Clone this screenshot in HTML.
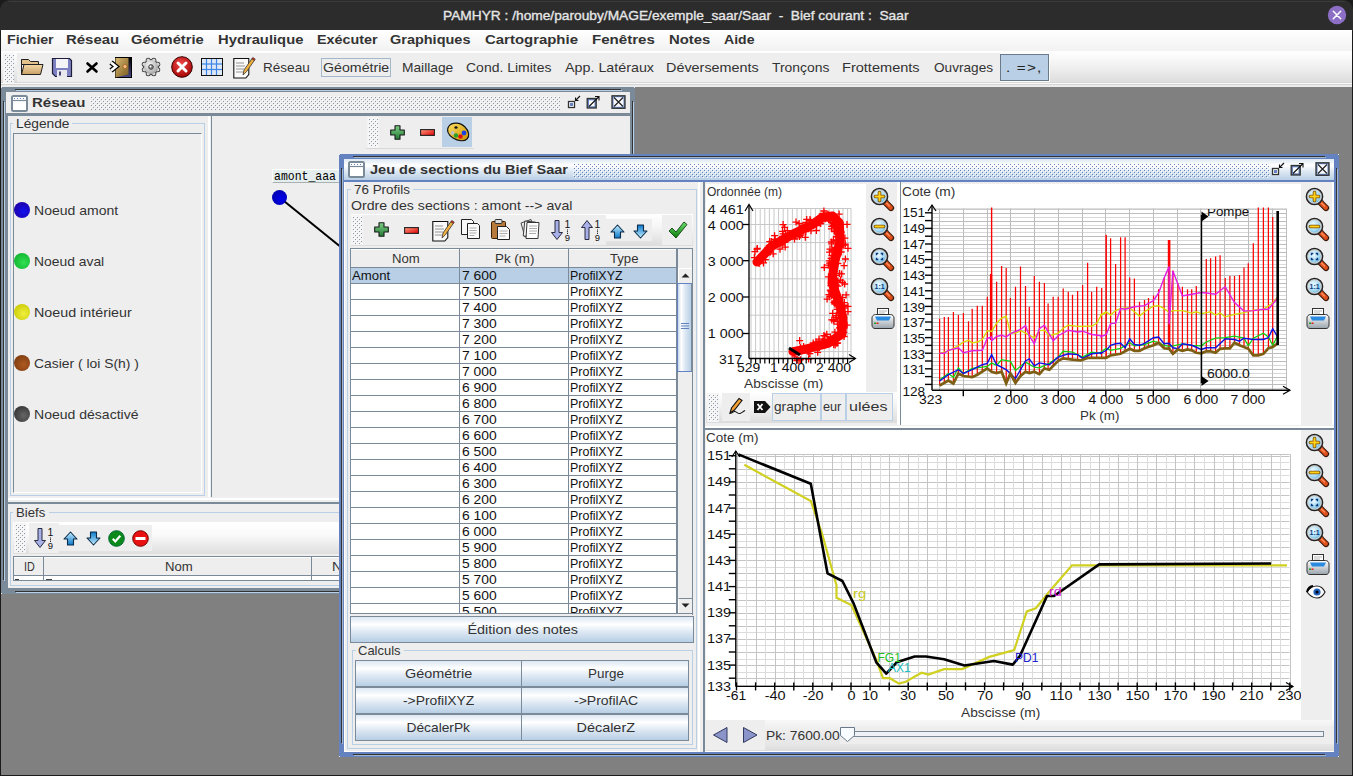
<!DOCTYPE html>
<html><head><meta charset="utf-8"><style>
*{box-sizing:border-box;margin:0;padding:0}
html,body{width:1353px;height:776px;overflow:hidden;background:#1b1b1b}
body{position:relative;font-family:"Liberation Sans",sans-serif}
.a{position:absolute}
.t{position:absolute;white-space:pre;line-height:1}
svg{position:absolute;overflow:visible}
</style></head><body>
<div class="a" style="left:1px;top:30px;width:1351px;height:745px;background:#808080"></div>
<div class="a" style="left:0px;top:0px;width:1353px;height:31px;background:#2c2c2c;border-radius:10px 10px 0 0"></div>
<div class="a" style="left:8px;top:1px;width:1337px;height:1px;background:#3a3a3a"></div>
<div id="t0" class="t" style="left:443.00px;top:9.00px;font-family:'Liberation Sans',sans-serif;font-size:13.5px;color:#e6e6e6;transform:scaleX(1.0175);transform-origin:0 0;-webkit-text-stroke:0.35px #e6e6e6">PAMHYR : /home/parouby/MAGE/exemple_saar/Saar  -  Bief courant :  Saar</div>
<svg style="left:1327px;top:5px" width="20" height="20"><circle cx="10" cy="10" r="9.2" fill="#8c6fc5"/><path d="M6.3 6.3L13.7 13.7M13.7 6.3L6.3 13.7" stroke="#fff" stroke-width="1.5" stroke-linecap="round"/></svg>
<div class="a" style="left:1px;top:30px;width:1351px;height:21px;background:linear-gradient(#ffffff,#f2f2f2)"></div>
<div id="t1" class="t" style="left:7.00px;top:34.00px;font-family:'Liberation Sans',sans-serif;font-size:12.7px;font-weight:bold;color:#333;transform:scaleX(1.1190);transform-origin:0 0;">Fichier</div>
<div id="t2" class="t" style="left:66.00px;top:34.00px;font-family:'Liberation Sans',sans-serif;font-size:12.7px;font-weight:bold;color:#333;transform:scaleX(1.1778);transform-origin:0 0;">Réseau</div>
<div id="t3" class="t" style="left:131.00px;top:34.00px;font-family:'Liberation Sans',sans-serif;font-size:12.7px;font-weight:bold;color:#333;transform:scaleX(1.1587);transform-origin:0 0;">Géométrie</div>
<div id="t4" class="t" style="left:218.00px;top:34.00px;font-family:'Liberation Sans',sans-serif;font-size:12.7px;font-weight:bold;color:#333;transform:scaleX(1.1644);transform-origin:0 0;">Hydraulique</div>
<div id="t5" class="t" style="left:317.00px;top:34.00px;font-family:'Liberation Sans',sans-serif;font-size:12.7px;font-weight:bold;color:#333;transform:scaleX(1.1296);transform-origin:0 0;">Exécuter</div>
<div id="t6" class="t" style="left:390.00px;top:34.00px;font-family:'Liberation Sans',sans-serif;font-size:12.7px;font-weight:bold;color:#333;transform:scaleX(1.1408);transform-origin:0 0;">Graphiques</div>
<div id="t7" class="t" style="left:485.00px;top:34.00px;font-family:'Liberation Sans',sans-serif;font-size:12.7px;font-weight:bold;color:#333;transform:scaleX(1.1772);transform-origin:0 0;">Cartographie</div>
<div id="t8" class="t" style="left:592.00px;top:34.00px;font-family:'Liberation Sans',sans-serif;font-size:12.7px;font-weight:bold;color:#333;transform:scaleX(1.1887);transform-origin:0 0;">Fenêtres</div>
<div id="t9" class="t" style="left:669.00px;top:34.00px;font-family:'Liberation Sans',sans-serif;font-size:12.7px;font-weight:bold;color:#333;transform:scaleX(1.1714);transform-origin:0 0;">Notes</div>
<div id="t10" class="t" style="left:724.00px;top:34.00px;font-family:'Liberation Sans',sans-serif;font-size:12.7px;font-weight:bold;color:#333;transform:scaleX(1.1071);transform-origin:0 0;">Aide</div>
<div class="a" style="left:1px;top:51px;width:1351px;height:36px;background:#eeeeee"></div>
<div class="a" style="left:1px;top:51px;width:1351px;height:32px;background:linear-gradient(#ffffff 0%,#f8f8f8 25%,#ececec 60%,#dcdcdc 100%)"></div>
<div class="a" style="left:17px;top:53px;width:983px;height:29px;background:#eeeeee"></div>
<div class="a" style="left:1px;top:82px;width:1351px;height:1px;background:#d6d6d6"></div>
<div class="a" style="left:1px;top:83px;width:1351px;height:1px;background:#fafafa"></div>
<div class="a" style="left:1px;top:84px;width:1351px;height:1px;background:#d4d4d4"></div>
<div class="a" style="left:1px;top:85px;width:1351px;height:2px;background:#ececec"></div>
<div class="a" style="left:3px;top:53px;width:11px;height:30px;background:#f3f3f3"></div>
<svg style="left:4px;top:54px" width="10" height="28"><defs><pattern id="gripm" width="4" height="4" patternUnits="userSpaceOnUse"><rect x="0" y="0" width="1" height="1" fill="#ffffff"/><rect x="2" y="2" width="1" height="1" fill="#ffffff"/><rect x="1" y="1" width="1" height="1" fill="#8a9aaa"/><rect x="3" y="3" width="1" height="1" fill="#8a9aaa"/></pattern></defs><rect width="10" height="28" fill="url(#gripm)"/></svg>
<svg style="left:20px;top:57px" width="24" height="20" viewBox="0 0 24 20"><defs><linearGradient id="fg" x1="0" y1="0" x2="0" y2="1"><stop offset="0" stop-color="#f3d9a6"/><stop offset="1" stop-color="#c9a066"/></linearGradient></defs><path d="M1.5 2.5h7l2 2h8v3h-17z" fill="#e2c28a" stroke="#222" stroke-width="1"/><path d="M1.5 17.5l2.5-10h19l-2.5 10z" fill="url(#fg)" stroke="#222" stroke-width="1"/><path d="M1.5 2.5v15" stroke="#222"/></svg>
<svg style="left:51px;top:57px" width="22" height="21" viewBox="0 0 22 21"><path d="M1.5 1.5h17l2 2v16h-16l-3-3z" fill="#7d80c0" stroke="#1e1e3a" stroke-width="1.2"/><rect x="5" y="2" width="12" height="9" fill="#f4f4f8"/><rect x="6" y="13" width="10" height="7" fill="#e8e8ee"/><rect x="8" y="14.5" width="2" height="4" fill="#45466e"/></svg>
<svg style="left:86px;top:62px" width="12" height="11" viewBox="0 0 12 11"><path d="M1.5 1.5L10.5 9.5M10.5 1.5L1.5 9.5" stroke="#000" stroke-width="2.6" stroke-linecap="round"/></svg>
<svg style="left:109px;top:57px" width="23" height="21" viewBox="0 0 23 21"><defs><linearGradient id="dg" x1="0" y1="0" x2="1" y2="1"><stop offset="0" stop-color="#d8b870"/><stop offset="1" stop-color="#7a5a20"/></linearGradient><linearGradient id="dk" x1="0" y1="0" x2="0" y2="1"><stop offset="0" stop-color="#000"/><stop offset="1" stop-color="#4a4a8a"/></linearGradient></defs><rect x="6.5" y="0.5" width="16" height="20" fill="url(#dk)" stroke="#000"/><path d="M6.5 1h13v16.5l-13 3z" fill="url(#dg)"/><circle cx="16" cy="9.5" r="2" fill="#f8c080" stroke="#a05010" stroke-width="0.6"/><path d="M2 5.5l5 4-5 4" fill="none" stroke="#000" stroke-width="5" stroke-linejoin="miter"/><path d="M2 5.5l5 4-5 4" fill="none" stroke="#fff" stroke-width="2.6" stroke-linejoin="miter"/></svg>
<svg style="left:141px;top:57px" width="20" height="20" viewBox="0 0 20 20"><defs><radialGradient id="gg" cx="0.4" cy="0.35" r="0.75"><stop offset="0" stop-color="#fafafa"/><stop offset="1" stop-color="#9a9a9a"/></radialGradient></defs><circle cx="16.74" cy="12.79" r="2.5" fill="#333"/><circle cx="12.79" cy="16.74" r="2.5" fill="#333"/><circle cx="7.21" cy="16.74" r="2.5" fill="#333"/><circle cx="3.26" cy="12.79" r="2.5" fill="#333"/><circle cx="3.26" cy="7.21" r="2.5" fill="#333"/><circle cx="7.21" cy="3.26" r="2.5" fill="#333"/><circle cx="12.79" cy="3.26" r="2.5" fill="#333"/><circle cx="16.74" cy="7.21" r="2.5" fill="#333"/><circle cx="10" cy="10" r="7.8" fill="#333"/><circle cx="16.74" cy="12.79" r="1.7" fill="#d8d8d8"/><circle cx="12.79" cy="16.74" r="1.7" fill="#d8d8d8"/><circle cx="7.21" cy="16.74" r="1.7" fill="#d8d8d8"/><circle cx="3.26" cy="12.79" r="1.7" fill="#d8d8d8"/><circle cx="3.26" cy="7.21" r="1.7" fill="#d8d8d8"/><circle cx="7.21" cy="3.26" r="1.7" fill="#d8d8d8"/><circle cx="12.79" cy="3.26" r="1.7" fill="#d8d8d8"/><circle cx="16.74" cy="7.21" r="1.7" fill="#d8d8d8"/><circle cx="10" cy="10" r="7" fill="url(#gg)"/><circle cx="10" cy="10" r="2.4" fill="#777" stroke="#444" stroke-width="0.8"/><circle cx="9.5" cy="9.5" r="1" fill="#fff"/></svg>
<svg style="left:171px;top:56px" width="22" height="22" viewBox="0 0 22 22"><defs><radialGradient id="rg" cx="0.45" cy="0.35" r="0.7"><stop offset="0" stop-color="#f04848"/><stop offset="1" stop-color="#a00000"/></radialGradient></defs><circle cx="11" cy="11" r="10.3" fill="url(#rg)" stroke="#3a0000" stroke-width="1"/><path d="M7 7L15 15M15 7L7 15" stroke="#fff" stroke-width="3" stroke-linecap="round"/></svg>
<svg style="left:201px;top:58px" width="22" height="18" viewBox="0 0 22 18"><rect x="0.5" y="0.5" width="21" height="17" fill="#dfe9f5" stroke="#111"/><path d="M5.5 1v16" stroke="#3c84e8" stroke-width="1.2"/><path d="M10.5 1v16" stroke="#3c84e8" stroke-width="1.2"/><path d="M15.5 1v16" stroke="#3c84e8" stroke-width="1.2"/><path d="M1 6h20" stroke="#3c84e8" stroke-width="1.2"/><path d="M1 11.5h20" stroke="#3c84e8" stroke-width="1.2"/></svg>
<svg style="left:233px;top:56px" width="22" height="23" viewBox="0 0 22 23"><path d="M0.8 2.5h15v16l-3 3.5h-12z" fill="#fafafa" stroke="#111" stroke-width="1.1"/><path d="M3 7h8M3 10h9M3 13h8M3 16h7" stroke="#888" stroke-width="0.9"/><path d="M10 19l1-5 8-11.5 2.5 1.7-8 11.5z" fill="#f0b040" stroke="#333" stroke-width="0.8"/><path d="M18.8 2.8l1-1.4 2.5 1.7-1 1.4z" fill="#d03020" stroke="#333" stroke-width="0.6"/></svg>
<div class="a" style="left:321px;top:58px;width:70px;height:19px;border:1px solid #a3b8cc"></div>
<div class="a" style="left:1000px;top:54px;width:50px;height:28px;background:#ffffff"></div>
<div class="a" style="left:1000px;top:54px;width:49px;height:27px;background:#b8cfe5;border:1px solid #6a7a8a"></div>
<div id="t11" class="t" style="left:263.00px;top:62.00px;font-family:'Liberation Sans',sans-serif;font-size:12.7px;color:#333;transform:scaleX(1.0682);transform-origin:0 0;">Réseau</div>
<div id="t12" class="t" style="left:323.00px;top:62.00px;font-family:'Liberation Sans',sans-serif;font-size:12.7px;color:#333;transform:scaleX(1.1186);transform-origin:0 0;">Géométrie</div>
<div id="t13" class="t" style="left:402.00px;top:62.00px;font-family:'Liberation Sans',sans-serif;font-size:12.7px;color:#333;transform:scaleX(1.0851);transform-origin:0 0;">Maillage</div>
<div id="t14" class="t" style="left:466.00px;top:62.00px;font-family:'Liberation Sans',sans-serif;font-size:12.7px;color:#333;transform:scaleX(1.1026);transform-origin:0 0;">Cond. Limites</div>
<div id="t15" class="t" style="left:565.00px;top:62.00px;font-family:'Liberation Sans',sans-serif;font-size:12.7px;color:#333;transform:scaleX(1.1266);transform-origin:0 0;">App. Latéraux</div>
<div id="t16" class="t" style="left:666.00px;top:62.00px;font-family:'Liberation Sans',sans-serif;font-size:12.7px;color:#333;transform:scaleX(1.1341);transform-origin:0 0;">Déversements</div>
<div id="t17" class="t" style="left:772.00px;top:62.00px;font-family:'Liberation Sans',sans-serif;font-size:12.7px;color:#333;transform:scaleX(1.0962);transform-origin:0 0;">Tronçons</div>
<div id="t18" class="t" style="left:842.00px;top:62.00px;font-family:'Liberation Sans',sans-serif;font-size:12.7px;color:#333;transform:scaleX(1.1471);transform-origin:0 0;">Frottements</div>
<div id="t19" class="t" style="left:934.00px;top:62.00px;font-family:'Liberation Sans',sans-serif;font-size:12.7px;color:#333;transform:scaleX(1.0727);transform-origin:0 0;">Ouvrages</div>
<div id="t20" class="t" style="left:1006.00px;top:62.00px;font-family:'Liberation Sans',sans-serif;font-size:12.7px;color:#222;transform:scaleX(1.2000);transform-origin:0 0;letter-spacing:1px">. =&gt;,</div>
<div class="a" style="left:2px;top:87px;width:632px;height:507px;background:#7a8a99"></div>
<div class="a" style="left:1px;top:88px;width:634px;height:505px;background:#7a8a99"></div>
<div class="a" style="left:16px;top:90px;width:606px;height:1px;background:#b8cfe5"></div>
<div class="a" style="left:4px;top:102px;width:1px;height:479px;background:#b8cfe5"></div>
<div class="a" style="left:633px;top:102px;width:1px;height:479px;background:#b8cfe5"></div>
<div class="a" style="left:16px;top:592px;width:606px;height:1px;background:#b8cfe5"></div>
<div class="a" style="left:15px;top:89px;width:606px;height:1px;background:#333333"></div>
<div class="a" style="left:3px;top:101px;width:1px;height:479px;background:#333333"></div>
<div class="a" style="left:632px;top:101px;width:1px;height:479px;background:#333333"></div>
<div class="a" style="left:15px;top:591px;width:606px;height:1px;background:#333333"></div>
<div class="a" style="left:1px;top:87px;width:1px;height:1px;background:#e8e8e8"></div>
<div class="a" style="left:634px;top:87px;width:1px;height:1px;background:#e8e8e8"></div>
<div class="a" style="left:1px;top:593px;width:1px;height:1px;background:#e8e8e8"></div>
<div class="a" style="left:634px;top:593px;width:1px;height:1px;background:#e8e8e8"></div>
<div class="a" style="left:6px;top:92px;width:624px;height:21px;background:#eeeeee"></div>
<div class="a" style="left:6px;top:113px;width:624px;height:3px;background:#7a8a99"></div>
<svg style="left:11px;top:95px" width="17" height="17" viewBox="0 0 17 17"><rect x="1" y="1" width="15" height="15" rx="1.5" fill="#fff" stroke="#7a8a99" stroke-width="2"/><rect x="2" y="2" width="13" height="3" fill="#fff"/><path d="M3 3.5h11" stroke="#6382bf" stroke-width="1" stroke-dasharray="1 2"/><path d="M2 5.5h13" stroke="#7a8a99" stroke-width="1.2"/></svg>
<div id="t21" class="t" style="left:32.00px;top:96.00px;font-family:'Liberation Sans',sans-serif;font-size:13px;font-weight:bold;color:#333;transform:scaleX(1.1522);transform-origin:0 0;">Réseau</div>
<svg style="left:90px;top:96px" width="470" height="14"><defs><pattern id="bres" width="4" height="4" patternUnits="userSpaceOnUse"><rect x="0" y="0" width="1" height="1" fill="#ffffff"/><rect x="2" y="2" width="1" height="1" fill="#ffffff"/><rect x="1" y="1" width="1" height="1" fill="#8a9aaa"/><rect x="3" y="3" width="1" height="1" fill="#8a9aaa"/></pattern></defs><rect width="470" height="14" fill="url(#bres)"/></svg>
<svg style="left:567px;top:95px" width="14" height="14" viewBox="0 0 14 14"><rect x="1.5" y="6.5" width="6" height="6" fill="#fff" stroke="#333" stroke-width="1.3"/><rect x="3" y="8" width="3" height="3" fill="#6382bf"/><path d="M13 1L8.5 5.5M8.5 2.5v3h3" fill="none" stroke="#111" stroke-width="1.1"/></svg>
<svg style="left:586px;top:95px" width="14" height="14" viewBox="0 0 14 14"><rect x="1.2" y="3.5" width="9" height="9.5" fill="#6382bf" stroke="#333" stroke-width="1.3"/><rect x="3" y="5.3" width="5.5" height="6" fill="#fff"/><path d="M3 11.5L12.5 2M9 1.5h4v4" fill="none" stroke="#111" stroke-width="1.1"/></svg>
<svg style="left:611px;top:95px" width="15" height="14" viewBox="0 0 15 14"><rect x="1" y="0.8" width="13" height="12.5" fill="#6382bf" stroke="#333" stroke-width="1.3"/><rect x="2.5" y="2.2" width="10" height="9.6" fill="#fff" opacity="0.95"/><path d="M3 2.5L12 11.5M12 2.5L3 11.5" stroke="#222" stroke-width="1.2"/></svg>
<div class="a" style="left:6px;top:116px;width:624px;height:472px;background:#eeeeee"></div>
<div class="a" style="left:629px;top:116px;width:1px;height:472px;background:#ffffff"></div>
<div class="a" style="left:6px;top:116px;width:2px;height:472px;background:#7a8a99"></div>
<div class="a" style="left:10px;top:123px;width:195px;height:373px;border:1px solid #b8cfe5"></div>
<div class="a" style="left:8px;top:116px;width:1px;height:1px;"></div>
<div class="a" style="left:13px;top:119px;width:59px;height:10px;background:#eeeeee"></div>
<div id="t22" class="t" style="left:16.00px;top:118.00px;font-family:'Liberation Sans',sans-serif;font-size:12.7px;color:#333;transform:scaleX(1.0816);transform-origin:0 0;">Légende</div>

<div class="a" style="left:13px;top:133px;width:189px;height:360px;border-top:1px solid #7a8a99;border-left:1px solid #7a8a99;border-right:1px solid #ffffff;border-bottom:1px solid #ffffff"></div>
<svg style="left:13px;top:201px" width="18" height="18"><defs><radialGradient id="n1010ee" cx="0.6" cy="0.6" r="0.7"><stop offset="0" stop-color="#1010ee"/><stop offset="1" stop-color="#2000a0"/></radialGradient></defs><circle cx="9" cy="9" r="8" fill="url(#n1010ee)"/></svg>
<div id="t23" class="t" style="left:34.00px;top:205.00px;font-family:'Liberation Sans',sans-serif;font-size:12.7px;color:#333;transform:scaleX(1.1053);transform-origin:0 0;">Noeud amont</div>
<svg style="left:13px;top:252px" width="18" height="18"><defs><radialGradient id="n30e050" cx="0.6" cy="0.6" r="0.7"><stop offset="0" stop-color="#30e050"/><stop offset="1" stop-color="#10b030"/></radialGradient></defs><circle cx="9" cy="9" r="8" fill="url(#n30e050)"/></svg>
<div id="t24" class="t" style="left:34.00px;top:256.00px;font-family:'Liberation Sans',sans-serif;font-size:12.7px;color:#333;transform:scaleX(1.0938);transform-origin:0 0;">Noeud aval</div>
<svg style="left:13px;top:303px" width="18" height="18"><defs><radialGradient id="nf0f040" cx="0.6" cy="0.6" r="0.7"><stop offset="0" stop-color="#f0f040"/><stop offset="1" stop-color="#c8c800"/></radialGradient></defs><circle cx="9" cy="9" r="8" fill="url(#nf0f040)"/></svg>
<div id="t25" class="t" style="left:34.00px;top:307.00px;font-family:'Liberation Sans',sans-serif;font-size:12.7px;color:#333;transform:scaleX(1.1264);transform-origin:0 0;">Noeud intérieur</div>
<svg style="left:13px;top:354px" width="18" height="18"><defs><radialGradient id="nb05a20" cx="0.6" cy="0.6" r="0.7"><stop offset="0" stop-color="#b05a20"/><stop offset="1" stop-color="#7a3a10"/></radialGradient></defs><circle cx="9" cy="9" r="8" fill="url(#nb05a20)"/></svg>
<div id="t26" class="t" style="left:34.00px;top:358.00px;font-family:'Liberation Sans',sans-serif;font-size:12.7px;color:#333;transform:scaleX(1.0938);transform-origin:0 0;">Casier ( loi S(h) )</div>
<svg style="left:13px;top:405px" width="18" height="18"><defs><radialGradient id="n666666" cx="0.6" cy="0.6" r="0.7"><stop offset="0" stop-color="#666666"/><stop offset="1" stop-color="#333333"/></radialGradient></defs><circle cx="9" cy="9" r="8" fill="url(#n666666)"/></svg>
<div id="t27" class="t" style="left:34.00px;top:409.00px;font-family:'Liberation Sans',sans-serif;font-size:12.7px;color:#333;transform:scaleX(1.1053);transform-origin:0 0;">Noeud désactivé</div>
<div class="a" style="left:207px;top:116px;width:4px;height:381px;background:#eeeeee"></div>
<div class="a" style="left:208px;top:116px;width:2px;height:381px;background:#ffffff"></div>
<div class="a" style="left:211px;top:116px;width:1px;height:381px;background:#7a8a99"></div>
<div class="a" style="left:212px;top:116px;width:418px;height:381px;background:#eeeeee"></div>
<div class="a" style="left:366px;top:117px;width:108px;height:32px;background:#eeeeee;border-bottom:1px solid #d8d8d8"></div>
<div class="a" style="left:367px;top:117px;width:12px;height:31px;background:#f4f4f4"></div>
<svg style="left:368px;top:118px" width="10" height="29"><defs><pattern id="gripc" width="4" height="4" patternUnits="userSpaceOnUse"><rect x="0" y="0" width="1" height="1" fill="#ffffff"/><rect x="2" y="2" width="1" height="1" fill="#ffffff"/><rect x="1" y="1" width="1" height="1" fill="#8a9aaa"/><rect x="3" y="3" width="1" height="1" fill="#8a9aaa"/></pattern></defs><rect width="10" height="29" fill="url(#gripc)"/></svg>
<svg style="left:390px;top:125px" width="15" height="15" viewBox="0 0 15 15"><defs><linearGradient id="gp" x1="0" y1="0" x2="0" y2="1"><stop offset="0" stop-color="#7fcf85"/><stop offset="1" stop-color="#237a35"/></linearGradient></defs><path d="M5 0.7h5v4.3h4.3v5h-4.3v4.3h-5v-4.3h-4.3v-5h4.3z" fill="url(#gp)" stroke="#1a1a1a" stroke-width="1.1" stroke-linejoin="round"/></svg>
<svg style="left:420px;top:129px" width="15" height="7" viewBox="0 0 15 7"><defs><linearGradient id="rm" x1="0" y1="0" x2="1" y2="1"><stop offset="0" stop-color="#ff9a80"/><stop offset="1" stop-color="#e00000"/></linearGradient></defs><rect x="0.6" y="0.6" width="13.8" height="5.8" fill="url(#rm)" stroke="#222" stroke-width="1.1"/></svg>
<div class="a" style="left:442px;top:117px;width:30px;height:30px;background:#b8cfe5"></div>
<svg style="left:446px;top:122px" width="24" height="20" viewBox="0 0 24 20"><defs><linearGradient id="pal" x1="0" y1="0" x2="1" y2="1"><stop offset="0" stop-color="#ffe060"/><stop offset="1" stop-color="#c89000"/></linearGradient></defs><path d="M3 4C6 0 14 0 19 5c4 4 5 9 2 12-3 3-9 2-14-1C2 13 0 8 3 4z" fill="url(#pal)" stroke="#111" stroke-width="1.1"/><ellipse cx="10" cy="5.5" rx="1.6" ry="1.3" fill="#111"/><circle cx="6.5" cy="11" r="2" fill="#c0c0c0"/><circle cx="10" cy="13.5" r="2.2" fill="#28a030"/><circle cx="14.5" cy="14.5" r="2.3" fill="#e01010"/><circle cx="18" cy="11" r="2.4" fill="#1a40e0"/></svg>
<div class="a" style="left:272px;top:169px;width:70px;height:14px;background:#e4eeee;border-top:1px solid #fff;border-left:1px solid #fff;border-bottom:1px solid #a8b0b0"></div>
<div id="t28" class="t" style="left:273.50px;top:170.00px;font-family:'Liberation Mono',monospace;font-size:13.5px;color:#000;transform:scaleX(0.8493);transform-origin:0 0;">amont_aaa</div>
<svg style="left:270px;top:190px" width="75" height="65"><line x1="9" y1="7" x2="72" y2="58" stroke="#000" stroke-width="2"/></svg>
<svg style="left:270.5px;top:188.5px" width="17.0" height="17.0"><defs><radialGradient id="n0000ee" cx="0.6" cy="0.6" r="0.7"><stop offset="0" stop-color="#0000ee"/><stop offset="1" stop-color="#0000a8"/></radialGradient></defs><circle cx="8.5" cy="8.5" r="7.5" fill="url(#n0000ee)"/></svg>
<div class="a" style="left:8px;top:497px;width:622px;height:7px;background:#eeeeee"></div>
<div class="a" style="left:8px;top:498px;width:622px;height:2px;background:#ffffff"></div>
<div class="a" style="left:8px;top:502px;width:622px;height:2px;background:#7a8a99"></div>
<div class="a" style="left:8px;top:504px;width:622px;height:84px;background:#eeeeee"></div>
<div class="a" style="left:10px;top:512px;width:619px;height:74px;border:1px solid #b8cfe5"></div>
<div class="a" style="left:13px;top:508px;width:36px;height:10px;background:#eeeeee"></div>
<div id="t29" class="t" style="left:16.00px;top:507.00px;font-family:'Liberation Sans',sans-serif;font-size:12.7px;color:#333;transform:scaleX(1.0357);transform-origin:0 0;">Biefs</div>
<div class="a" style="left:13px;top:522px;width:620px;height:32px;background:linear-gradient(#ffffff,#fafafa 40%,#dedede)"></div>
<div class="a" style="left:14px;top:523px;width:12px;height:30px;background:#f4f4f4"></div>
<svg style="left:15px;top:524px" width="10" height="28"><defs><pattern id="gripb" width="4" height="4" patternUnits="userSpaceOnUse"><rect x="0" y="0" width="1" height="1" fill="#ffffff"/><rect x="2" y="2" width="1" height="1" fill="#ffffff"/><rect x="1" y="1" width="1" height="1" fill="#8a9aaa"/><rect x="3" y="3" width="1" height="1" fill="#8a9aaa"/></pattern></defs><rect width="10" height="28" fill="url(#gripb)"/></svg>
<div class="a" style="left:29px;top:523px;width:30px;height:30px;background:#eeeeee"></div>
<div class="a" style="left:59px;top:525px;width:93px;height:26px;background:#eeeeee"></div>
<svg style="left:34px;top:528px" width="20" height="21" viewBox="0 0 20 21"><path d="M4 0.5H8V12.5H11.5L6 19.5L0.5 12.5H4Z" fill="#a8b0e8" stroke="#2a2a40" stroke-width="1" stroke-linejoin="round"/><text x="16.5" y="8" font-family="Liberation Sans" font-size="10.5" text-anchor="middle" fill="#111">1</text><rect x="16" y="9.5" width="1" height="1" fill="#111"/><rect x="16" y="11.2" width="1" height="1" fill="#111"/><rect x="16" y="12.9" width="1" height="1" fill="#111"/><text x="16.5" y="21" font-family="Liberation Sans" font-size="9.5" text-anchor="middle" fill="#111">9</text></svg>
<svg style="left:63px;top:531px" width="15" height="15" viewBox="0 0 15 15"><defs><linearGradient id="ua0" x1="0" y1="0" x2="0" y2="1"><stop offset="0" stop-color="#c8f0ff"/><stop offset="1" stop-color="#0a78c8"/></linearGradient></defs><g ><path d="M7.5 1L14 8H10.5v6h-6V8H1z" fill="url(#ua0)" stroke="#0d2d4a" stroke-width="1.1" stroke-linejoin="round"/></g></svg>
<svg style="left:86px;top:531px" width="15" height="15" viewBox="0 0 15 15"><defs><linearGradient id="ua1" x1="0" y1="0" x2="0" y2="1"><stop offset="0" stop-color="#c8f0ff"/><stop offset="1" stop-color="#0a78c8"/></linearGradient></defs><g transform="rotate(180 7.5 7.5)"><path d="M7.5 1L14 8H10.5v6h-6V8H1z" fill="url(#ua1)" stroke="#0d2d4a" stroke-width="1.1" stroke-linejoin="round"/></g></svg>
<svg style="left:108px;top:530px" width="17" height="17" viewBox="0 0 17 17"><circle cx="8.5" cy="8.5" r="7.8" fill="#0b8a1b" stroke="#063" stroke-width="1"/><path d="M4.8 8.8l2.5 2.6 5-5.6" fill="none" stroke="#fff" stroke-width="2.2"/></svg>
<svg style="left:132px;top:530px" width="17" height="17" viewBox="0 0 17 17"><circle cx="8.5" cy="8.5" r="7.8" fill="#e81010" stroke="#700" stroke-width="1"/><rect x="3.5" y="7" width="10" height="3" fill="#fff"/></svg>
<div class="a" style="left:13px;top:556px;width:620px;height:25px;background:#ffffff;border:1px solid #7a8a99"></div>
<div class="a" style="left:14px;top:557px;width:619px;height:18px;background:#eeeeee"></div>
<div class="a" style="left:14px;top:557px;width:619px;height:1px;background:#ffffff"></div>
<div class="a" style="left:14px;top:575px;width:619px;height:1px;background:#7a8a99"></div>
<div class="a" style="left:43px;top:557px;width:1px;height:23px;background:#7a8a99"></div>
<div class="a" style="left:311px;top:557px;width:1px;height:23px;background:#7a8a99"></div>
<div id="t30" class="t" style="left:24.00px;top:561.00px;font-family:'Liberation Sans',sans-serif;font-size:12.7px;color:#333;transform:scaleX(0.8462);transform-origin:0 0;">ID</div>
<div id="t31" class="t" style="left:165.00px;top:561.00px;font-family:'Liberation Sans',sans-serif;font-size:12.7px;color:#333;transform:scaleX(1.0370);transform-origin:0 0;">Nom</div>
<div id="t32" class="t" style="left:332.00px;top:561.00px;font-family:'Liberation Sans',sans-serif;font-size:12.7px;color:#333;transform:scaleX(1.1111);transform-origin:0 0;">N</div>
<div class="a" style="left:15px;top:579px;width:4px;height:1px;background:#333"></div>
<div class="a" style="left:46px;top:579px;width:6px;height:1px;background:#444"></div>
<div class="a" style="left:340px;top:154px;width:998px;height:603px;background:#6382bf"></div>
<div class="a" style="left:339px;top:155px;width:1000px;height:601px;background:#6382bf"></div>
<div class="a" style="left:354px;top:157px;width:972px;height:1px;background:#a3b8cc"></div>
<div class="a" style="left:342px;top:169px;width:1px;height:575px;background:#a3b8cc"></div>
<div class="a" style="left:1337px;top:169px;width:1px;height:575px;background:#a3b8cc"></div>
<div class="a" style="left:354px;top:755px;width:972px;height:1px;background:#a3b8cc"></div>
<div class="a" style="left:353px;top:156px;width:972px;height:1px;background:#333333"></div>
<div class="a" style="left:341px;top:168px;width:1px;height:575px;background:#333333"></div>
<div class="a" style="left:1336px;top:168px;width:1px;height:575px;background:#333333"></div>
<div class="a" style="left:353px;top:754px;width:972px;height:1px;background:#333333"></div>
<div class="a" style="left:339px;top:154px;width:1px;height:1px;background:#e8e8e8"></div>
<div class="a" style="left:1338px;top:154px;width:1px;height:1px;background:#e8e8e8"></div>
<div class="a" style="left:339px;top:756px;width:1px;height:1px;background:#e8e8e8"></div>
<div class="a" style="left:1338px;top:756px;width:1px;height:1px;background:#e8e8e8"></div>
<div class="a" style="left:344px;top:159px;width:990px;height:21px;background:linear-gradient(#dde8f3 0%,#ffffff 30%,#dde8f3 60%,#b8cfe5 100%)"></div>
<div class="a" style="left:344px;top:180px;width:990px;height:2px;background:#6382bf"></div>
<svg style="left:348px;top:161px" width="17" height="17" viewBox="0 0 17 17"><rect x="1" y="1" width="15" height="15" rx="1.5" fill="#fff" stroke="#7a8a99" stroke-width="2"/><rect x="2" y="2" width="13" height="3" fill="#fff"/><path d="M3 3.5h11" stroke="#6382bf" stroke-width="1" stroke-dasharray="1 2"/><path d="M2 5.5h13" stroke="#7a8a99" stroke-width="1.2"/></svg>
<div id="t33" class="t" style="left:370.00px;top:163.00px;font-family:'Liberation Sans',sans-serif;font-size:13px;font-weight:bold;color:#333;transform:scaleX(1.1186);transform-origin:0 0;">Jeu de sections du Bief Saar</div>
<svg style="left:573px;top:163px" width="697" height="15"><defs><pattern id="bjeu" width="4" height="4" patternUnits="userSpaceOnUse"><rect x="0" y="0" width="1" height="1" fill="#ffffff"/><rect x="2" y="2" width="1" height="1" fill="#ffffff"/><rect x="1" y="1" width="1" height="1" fill="#6382bf"/><rect x="3" y="3" width="1" height="1" fill="#6382bf"/></pattern></defs><rect width="697" height="15" fill="url(#bjeu)"/></svg>
<svg style="left:1271px;top:162px" width="14" height="14" viewBox="0 0 14 14"><rect x="1.5" y="6.5" width="6" height="6" fill="#fff" stroke="#333" stroke-width="1.3"/><rect x="3" y="8" width="3" height="3" fill="#6382bf"/><path d="M13 1L8.5 5.5M8.5 2.5v3h3" fill="none" stroke="#111" stroke-width="1.1"/></svg>
<svg style="left:1290px;top:162px" width="14" height="14" viewBox="0 0 14 14"><rect x="1.2" y="3.5" width="9" height="9.5" fill="#6382bf" stroke="#333" stroke-width="1.3"/><rect x="3" y="5.3" width="5.5" height="6" fill="#fff"/><path d="M3 11.5L12.5 2M9 1.5h4v4" fill="none" stroke="#111" stroke-width="1.1"/></svg>
<svg style="left:1315px;top:162px" width="15" height="14" viewBox="0 0 15 14"><rect x="1" y="0.8" width="13" height="12.5" fill="#6382bf" stroke="#333" stroke-width="1.3"/><rect x="2.5" y="2.2" width="10" height="9.6" fill="#fff" opacity="0.95"/><path d="M3 2.5L12 11.5M12 2.5L3 11.5" stroke="#222" stroke-width="1.2"/></svg>
<div class="a" style="left:344px;top:182px;width:990px;height:570px;background:#eeeeee"></div>
<div class="a" style="left:344px;top:182px;width:1px;height:570px;background:#ffffff"></div>
<div class="a" style="left:344px;top:751px;width:990px;height:1px;background:#ffffff"></div>
<div class="a" style="left:1332px;top:182px;width:2px;height:570px;background:#ffffff"></div>
<div class="a" style="left:347px;top:189px;width:350px;height:560px;border:1px solid #b8cfe5"></div>
<div class="a" style="left:351px;top:184px;width:62px;height:10px;background:#eeeeee"></div>
<div id="t34" class="t" style="left:354.00px;top:184.00px;font-family:'Liberation Sans',sans-serif;font-size:12.7px;color:#333;transform:scaleX(1.0566);transform-origin:0 0;">76 Profils</div>
<div id="t35" class="t" style="left:350.50px;top:200.00px;font-family:'Liberation Sans',sans-serif;font-size:12.7px;color:#333;transform:scaleX(1.1156);transform-origin:0 0;">Ordre des sections : amont --&gt; aval</div>
<div class="a" style="left:351px;top:214px;width:342px;height:32px;background:linear-gradient(#ffffff,#f6f6f6 40%,#dcdcdc)"></div>
<div class="a" style="left:351px;top:215px;width:12px;height:30px;background:#f4f4f4"></div>
<svg style="left:352px;top:216px" width="10" height="28"><defs><pattern id="gripj" width="4" height="4" patternUnits="userSpaceOnUse"><rect x="0" y="0" width="1" height="1" fill="#ffffff"/><rect x="2" y="2" width="1" height="1" fill="#ffffff"/><rect x="1" y="1" width="1" height="1" fill="#8a9aaa"/><rect x="3" y="3" width="1" height="1" fill="#8a9aaa"/></pattern></defs><rect width="10" height="28" fill="url(#gripj)"/></svg>
<div class="a" style="left:363px;top:215px;width:243px;height:30px;background:#eeeeee"></div>
<div class="a" style="left:606px;top:219px;width:46px;height:22px;background:#eeeeee"></div>
<div class="a" style="left:662px;top:215px;width:30px;height:30px;background:#eeeeee"></div>
<svg style="left:374px;top:222px" width="15" height="15" viewBox="0 0 15 15"><defs><linearGradient id="gp" x1="0" y1="0" x2="0" y2="1"><stop offset="0" stop-color="#7fcf85"/><stop offset="1" stop-color="#237a35"/></linearGradient></defs><path d="M5 0.7h5v4.3h4.3v5h-4.3v4.3h-5v-4.3h-4.3v-5h4.3z" fill="url(#gp)" stroke="#1a1a1a" stroke-width="1.1" stroke-linejoin="round"/></svg>
<svg style="left:404px;top:227px" width="15" height="7" viewBox="0 0 15 7"><defs><linearGradient id="rm" x1="0" y1="0" x2="1" y2="1"><stop offset="0" stop-color="#ff9a80"/><stop offset="1" stop-color="#e00000"/></linearGradient></defs><rect x="0.6" y="0.6" width="13.8" height="5.8" fill="url(#rm)" stroke="#222" stroke-width="1.1"/></svg>
<svg style="left:432px;top:219px" width="22" height="23" viewBox="0 0 22 23"><path d="M0.8 2.5h15v16l-3 3.5h-12z" fill="#fafafa" stroke="#111" stroke-width="1.1"/><path d="M3 7h8M3 10h9M3 13h8M3 16h7" stroke="#888" stroke-width="0.9"/><path d="M10 19l1-5 8-11.5 2.5 1.7-8 11.5z" fill="#f0b040" stroke="#333" stroke-width="0.8"/><path d="M18.8 2.8l1-1.4 2.5 1.7-1 1.4z" fill="#d03020" stroke="#333" stroke-width="0.6"/></svg>
<svg style="left:461px;top:219px" width="19" height="20" viewBox="0 0 19 20"><path d="M0.5 0.5h10l2 2v13h-12z" fill="#fafafa" stroke="#222"/><path d="M6.5 4.5h10l2 2v13h-12z" fill="#fafafa" stroke="#222"/><path d="M8.5 9h7M8.5 11.5h7M8.5 14h7M8.5 16.5h5" stroke="#999" stroke-width="0.8"/></svg>
<svg style="left:491px;top:219px" width="19" height="21" viewBox="0 0 19 21"><rect x="0.5" y="2.5" width="14" height="17" rx="1" fill="#b87a3a" stroke="#3a2000"/><rect x="4" y="0.5" width="7" height="4" rx="1" fill="#ddd" stroke="#333"/><path d="M6.5 7.5h9l3 3v10h-12z" fill="#fafafa" stroke="#222"/><path d="M8.5 12h8M8.5 14.5h8M8.5 17h6" stroke="#999" stroke-width="0.8"/></svg>
<svg style="left:520px;top:219px" width="22" height="21" viewBox="0 0 22 21"><path d="M1 4l10-3.5 4 14-10 3.5z" fill="#f0f0f0" stroke="#333" stroke-width="0.9"/><path d="M4 2.5h11v15H4z" fill="#f6f6f6" stroke="#333" stroke-width="0.9" transform="rotate(6 9 10)"/><path d="M7 3.5h12l-1 16H6z" fill="#fff" stroke="#222" stroke-width="0.9"/><path d="M9 7h8M9 9.5h8M9 12h8M9 14.5h7" stroke="#999" stroke-width="0.8"/></svg>
<svg style="left:551px;top:220px" width="20" height="21" viewBox="0 0 20 21"><path d="M4 0.5H8V12.5H11.5L6 19.5L0.5 12.5H4Z" fill="#a8b0e8" stroke="#2a2a40" stroke-width="1" stroke-linejoin="round"/><text x="16.5" y="8" font-family="Liberation Sans" font-size="10.5" text-anchor="middle" fill="#111">1</text><rect x="16" y="9.5" width="1" height="1" fill="#111"/><rect x="16" y="11.2" width="1" height="1" fill="#111"/><rect x="16" y="12.9" width="1" height="1" fill="#111"/><text x="16.5" y="21" font-family="Liberation Sans" font-size="9.5" text-anchor="middle" fill="#111">9</text></svg>
<svg style="left:581px;top:220px" width="20" height="21" viewBox="0 0 20 21"><path d="M4 19.5H8V7.5H11.5L6 0.5L0.5 7.5H4Z" fill="#a8b0e8" stroke="#2a2a40" stroke-width="1" stroke-linejoin="round"/><text x="16.5" y="8" font-family="Liberation Sans" font-size="10.5" text-anchor="middle" fill="#111">1</text><rect x="16" y="9.5" width="1" height="1" fill="#111"/><rect x="16" y="11.2" width="1" height="1" fill="#111"/><rect x="16" y="12.9" width="1" height="1" fill="#111"/><text x="16.5" y="21" font-family="Liberation Sans" font-size="9.5" text-anchor="middle" fill="#111">9</text></svg>
<svg style="left:610px;top:224px" width="15" height="15" viewBox="0 0 15 15"><defs><linearGradient id="ua0" x1="0" y1="0" x2="0" y2="1"><stop offset="0" stop-color="#c8f0ff"/><stop offset="1" stop-color="#0a78c8"/></linearGradient></defs><g ><path d="M7.5 1L14 8H10.5v6h-6V8H1z" fill="url(#ua0)" stroke="#0d2d4a" stroke-width="1.1" stroke-linejoin="round"/></g></svg>
<svg style="left:633px;top:224px" width="15" height="15" viewBox="0 0 15 15"><defs><linearGradient id="ua1" x1="0" y1="0" x2="0" y2="1"><stop offset="0" stop-color="#c8f0ff"/><stop offset="1" stop-color="#0a78c8"/></linearGradient></defs><g transform="rotate(180 7.5 7.5)"><path d="M7.5 1L14 8H10.5v6h-6V8H1z" fill="url(#ua1)" stroke="#0d2d4a" stroke-width="1.1" stroke-linejoin="round"/></g></svg>
<svg style="left:668px;top:221px" width="19" height="18" viewBox="0 0 19 18"><defs><linearGradient id="bc" x1="0" y1="0" x2="0" y2="1"><stop offset="0" stop-color="#6ee06e"/><stop offset="1" stop-color="#0a7a0a"/></linearGradient></defs><path d="M1 10l3-3 4 4L16 1l3 2.5L8 17z" fill="url(#bc)" stroke="#114411" stroke-width="0.9" stroke-linejoin="round"/></svg>
<div class="a" style="left:350px;top:248px;width:343px;height:367px;background:#ffffff;border:1px solid #7a8a99"></div>
<div class="a" style="left:351px;top:249px;width:326px;height:18px;background:#eeeeee"></div>
<div class="a" style="left:351px;top:249px;width:326px;height:1px;background:#ffffff"></div>
<div class="a" style="left:351px;top:267px;width:326px;height:1px;background:#7a8a99"></div>
<div class="a" style="left:677px;top:249px;width:15px;height:19px;background:#eeeeee;border-left:1px solid #7a8a99"></div>
<div id="t36" class="t" style="left:392.00px;top:253.00px;font-family:'Liberation Sans',sans-serif;font-size:12.7px;color:#333;transform:scaleX(1.0370);transform-origin:0 0;">Nom</div>
<div id="t37" class="t" style="left:495.00px;top:253.00px;font-family:'Liberation Sans',sans-serif;font-size:12.7px;color:#333;transform:scaleX(1.0541);transform-origin:0 0;">Pk (m)</div>
<div id="t38" class="t" style="left:610.00px;top:253.00px;font-family:'Liberation Sans',sans-serif;font-size:12.7px;color:#333;transform:scaleX(1.0357);transform-origin:0 0;">Type</div>
<div class="a" style="left:351px;top:268px;width:326px;height:15px;background:#b8cfe5"></div>
<div class="a" style="left:351px;top:283px;width:326px;height:1px;background:#7a8a99"></div>
<div id="t39" class="t" style="left:461.50px;top:270.00px;font-family:'Liberation Sans',sans-serif;font-size:12.7px;color:#111;transform:scaleX(1.0938);transform-origin:0 0;">7 600</div>
<div id="t40" class="t" style="left:570.00px;top:270.00px;font-family:'Liberation Sans',sans-serif;font-size:12.7px;color:#111;transform:scaleX(0.9815);transform-origin:0 0;">ProfilXYZ</div>
<div class="a" style="left:351px;top:299px;width:326px;height:1px;background:#7a8a99"></div>
<div id="t41" class="t" style="left:461.50px;top:286.00px;font-family:'Liberation Sans',sans-serif;font-size:12.7px;color:#111;transform:scaleX(1.0938);transform-origin:0 0;">7 500</div>
<div id="t42" class="t" style="left:570.00px;top:286.00px;font-family:'Liberation Sans',sans-serif;font-size:12.7px;color:#111;transform:scaleX(0.9815);transform-origin:0 0;">ProfilXYZ</div>
<div class="a" style="left:351px;top:315px;width:326px;height:1px;background:#7a8a99"></div>
<div id="t43" class="t" style="left:461.50px;top:302.00px;font-family:'Liberation Sans',sans-serif;font-size:12.7px;color:#111;transform:scaleX(1.0938);transform-origin:0 0;">7 400</div>
<div id="t44" class="t" style="left:570.00px;top:302.00px;font-family:'Liberation Sans',sans-serif;font-size:12.7px;color:#111;transform:scaleX(0.9815);transform-origin:0 0;">ProfilXYZ</div>
<div class="a" style="left:351px;top:331px;width:326px;height:1px;background:#7a8a99"></div>
<div id="t45" class="t" style="left:461.50px;top:318.00px;font-family:'Liberation Sans',sans-serif;font-size:12.7px;color:#111;transform:scaleX(1.0938);transform-origin:0 0;">7 300</div>
<div id="t46" class="t" style="left:570.00px;top:318.00px;font-family:'Liberation Sans',sans-serif;font-size:12.7px;color:#111;transform:scaleX(0.9815);transform-origin:0 0;">ProfilXYZ</div>
<div class="a" style="left:351px;top:347px;width:326px;height:1px;background:#7a8a99"></div>
<div id="t47" class="t" style="left:461.50px;top:334.00px;font-family:'Liberation Sans',sans-serif;font-size:12.7px;color:#111;transform:scaleX(1.0938);transform-origin:0 0;">7 200</div>
<div id="t48" class="t" style="left:570.00px;top:334.00px;font-family:'Liberation Sans',sans-serif;font-size:12.7px;color:#111;transform:scaleX(0.9815);transform-origin:0 0;">ProfilXYZ</div>
<div class="a" style="left:351px;top:363px;width:326px;height:1px;background:#7a8a99"></div>
<div id="t49" class="t" style="left:461.50px;top:350.00px;font-family:'Liberation Sans',sans-serif;font-size:12.7px;color:#111;transform:scaleX(1.0938);transform-origin:0 0;">7 100</div>
<div id="t50" class="t" style="left:570.00px;top:350.00px;font-family:'Liberation Sans',sans-serif;font-size:12.7px;color:#111;transform:scaleX(0.9815);transform-origin:0 0;">ProfilXYZ</div>
<div class="a" style="left:351px;top:379px;width:326px;height:1px;background:#7a8a99"></div>
<div id="t51" class="t" style="left:461.50px;top:366.00px;font-family:'Liberation Sans',sans-serif;font-size:12.7px;color:#111;transform:scaleX(1.0938);transform-origin:0 0;">7 000</div>
<div id="t52" class="t" style="left:570.00px;top:366.00px;font-family:'Liberation Sans',sans-serif;font-size:12.7px;color:#111;transform:scaleX(0.9815);transform-origin:0 0;">ProfilXYZ</div>
<div class="a" style="left:351px;top:395px;width:326px;height:1px;background:#7a8a99"></div>
<div id="t53" class="t" style="left:461.50px;top:382.00px;font-family:'Liberation Sans',sans-serif;font-size:12.7px;color:#111;transform:scaleX(1.0938);transform-origin:0 0;">6 900</div>
<div id="t54" class="t" style="left:570.00px;top:382.00px;font-family:'Liberation Sans',sans-serif;font-size:12.7px;color:#111;transform:scaleX(0.9815);transform-origin:0 0;">ProfilXYZ</div>
<div class="a" style="left:351px;top:411px;width:326px;height:1px;background:#7a8a99"></div>
<div id="t55" class="t" style="left:461.50px;top:398.00px;font-family:'Liberation Sans',sans-serif;font-size:12.7px;color:#111;transform:scaleX(1.0938);transform-origin:0 0;">6 800</div>
<div id="t56" class="t" style="left:570.00px;top:398.00px;font-family:'Liberation Sans',sans-serif;font-size:12.7px;color:#111;transform:scaleX(0.9815);transform-origin:0 0;">ProfilXYZ</div>
<div class="a" style="left:351px;top:427px;width:326px;height:1px;background:#7a8a99"></div>
<div id="t57" class="t" style="left:461.50px;top:414.00px;font-family:'Liberation Sans',sans-serif;font-size:12.7px;color:#111;transform:scaleX(1.0938);transform-origin:0 0;">6 700</div>
<div id="t58" class="t" style="left:570.00px;top:414.00px;font-family:'Liberation Sans',sans-serif;font-size:12.7px;color:#111;transform:scaleX(0.9815);transform-origin:0 0;">ProfilXYZ</div>
<div class="a" style="left:351px;top:443px;width:326px;height:1px;background:#7a8a99"></div>
<div id="t59" class="t" style="left:461.50px;top:430.00px;font-family:'Liberation Sans',sans-serif;font-size:12.7px;color:#111;transform:scaleX(1.0938);transform-origin:0 0;">6 600</div>
<div id="t60" class="t" style="left:570.00px;top:430.00px;font-family:'Liberation Sans',sans-serif;font-size:12.7px;color:#111;transform:scaleX(0.9815);transform-origin:0 0;">ProfilXYZ</div>
<div class="a" style="left:351px;top:459px;width:326px;height:1px;background:#7a8a99"></div>
<div id="t61" class="t" style="left:461.50px;top:446.00px;font-family:'Liberation Sans',sans-serif;font-size:12.7px;color:#111;transform:scaleX(1.0938);transform-origin:0 0;">6 500</div>
<div id="t62" class="t" style="left:570.00px;top:446.00px;font-family:'Liberation Sans',sans-serif;font-size:12.7px;color:#111;transform:scaleX(0.9815);transform-origin:0 0;">ProfilXYZ</div>
<div class="a" style="left:351px;top:475px;width:326px;height:1px;background:#7a8a99"></div>
<div id="t63" class="t" style="left:461.50px;top:462.00px;font-family:'Liberation Sans',sans-serif;font-size:12.7px;color:#111;transform:scaleX(1.0938);transform-origin:0 0;">6 400</div>
<div id="t64" class="t" style="left:570.00px;top:462.00px;font-family:'Liberation Sans',sans-serif;font-size:12.7px;color:#111;transform:scaleX(0.9815);transform-origin:0 0;">ProfilXYZ</div>
<div class="a" style="left:351px;top:491px;width:326px;height:1px;background:#7a8a99"></div>
<div id="t65" class="t" style="left:461.50px;top:478.00px;font-family:'Liberation Sans',sans-serif;font-size:12.7px;color:#111;transform:scaleX(1.0938);transform-origin:0 0;">6 300</div>
<div id="t66" class="t" style="left:570.00px;top:478.00px;font-family:'Liberation Sans',sans-serif;font-size:12.7px;color:#111;transform:scaleX(0.9815);transform-origin:0 0;">ProfilXYZ</div>
<div class="a" style="left:351px;top:507px;width:326px;height:1px;background:#7a8a99"></div>
<div id="t67" class="t" style="left:461.50px;top:494.00px;font-family:'Liberation Sans',sans-serif;font-size:12.7px;color:#111;transform:scaleX(1.0938);transform-origin:0 0;">6 200</div>
<div id="t68" class="t" style="left:570.00px;top:494.00px;font-family:'Liberation Sans',sans-serif;font-size:12.7px;color:#111;transform:scaleX(0.9815);transform-origin:0 0;">ProfilXYZ</div>
<div class="a" style="left:351px;top:523px;width:326px;height:1px;background:#7a8a99"></div>
<div id="t69" class="t" style="left:461.50px;top:510.00px;font-family:'Liberation Sans',sans-serif;font-size:12.7px;color:#111;transform:scaleX(1.0938);transform-origin:0 0;">6 100</div>
<div id="t70" class="t" style="left:570.00px;top:510.00px;font-family:'Liberation Sans',sans-serif;font-size:12.7px;color:#111;transform:scaleX(0.9815);transform-origin:0 0;">ProfilXYZ</div>
<div class="a" style="left:351px;top:539px;width:326px;height:1px;background:#7a8a99"></div>
<div id="t71" class="t" style="left:461.50px;top:526.00px;font-family:'Liberation Sans',sans-serif;font-size:12.7px;color:#111;transform:scaleX(1.0938);transform-origin:0 0;">6 000</div>
<div id="t72" class="t" style="left:570.00px;top:526.00px;font-family:'Liberation Sans',sans-serif;font-size:12.7px;color:#111;transform:scaleX(0.9815);transform-origin:0 0;">ProfilXYZ</div>
<div class="a" style="left:351px;top:555px;width:326px;height:1px;background:#7a8a99"></div>
<div id="t73" class="t" style="left:461.50px;top:542.00px;font-family:'Liberation Sans',sans-serif;font-size:12.7px;color:#111;transform:scaleX(1.0938);transform-origin:0 0;">5 900</div>
<div id="t74" class="t" style="left:570.00px;top:542.00px;font-family:'Liberation Sans',sans-serif;font-size:12.7px;color:#111;transform:scaleX(0.9815);transform-origin:0 0;">ProfilXYZ</div>
<div class="a" style="left:351px;top:571px;width:326px;height:1px;background:#7a8a99"></div>
<div id="t75" class="t" style="left:461.50px;top:558.00px;font-family:'Liberation Sans',sans-serif;font-size:12.7px;color:#111;transform:scaleX(1.0938);transform-origin:0 0;">5 800</div>
<div id="t76" class="t" style="left:570.00px;top:558.00px;font-family:'Liberation Sans',sans-serif;font-size:12.7px;color:#111;transform:scaleX(0.9815);transform-origin:0 0;">ProfilXYZ</div>
<div class="a" style="left:351px;top:587px;width:326px;height:1px;background:#7a8a99"></div>
<div id="t77" class="t" style="left:461.50px;top:574.00px;font-family:'Liberation Sans',sans-serif;font-size:12.7px;color:#111;transform:scaleX(1.0938);transform-origin:0 0;">5 700</div>
<div id="t78" class="t" style="left:570.00px;top:574.00px;font-family:'Liberation Sans',sans-serif;font-size:12.7px;color:#111;transform:scaleX(0.9815);transform-origin:0 0;">ProfilXYZ</div>
<div class="a" style="left:351px;top:603px;width:326px;height:1px;background:#7a8a99"></div>
<div id="t79" class="t" style="left:461.50px;top:590.00px;font-family:'Liberation Sans',sans-serif;font-size:12.7px;color:#111;transform:scaleX(1.0938);transform-origin:0 0;">5 600</div>
<div id="t80" class="t" style="left:570.00px;top:590.00px;font-family:'Liberation Sans',sans-serif;font-size:12.7px;color:#111;transform:scaleX(0.9815);transform-origin:0 0;">ProfilXYZ</div>
<div id="t81" class="t" style="left:461.50px;top:606.00px;font-family:'Liberation Sans',sans-serif;font-size:12.7px;color:#111;transform:scaleX(1.0938);transform-origin:0 0;">5 500</div>
<div id="t82" class="t" style="left:570.00px;top:606.00px;font-family:'Liberation Sans',sans-serif;font-size:12.7px;color:#111;transform:scaleX(0.9815);transform-origin:0 0;">ProfilXYZ</div>
<div id="t83" class="t" style="left:352.00px;top:270.00px;font-family:'Liberation Sans',sans-serif;font-size:12.7px;color:#111;transform:scaleX(1.0405);transform-origin:0 0;">Amont</div>
<div class="a" style="left:459px;top:249px;width:1px;height:365px;background:#7a8a99"></div>
<div class="a" style="left:568px;top:249px;width:1px;height:365px;background:#7a8a99"></div>
<div class="a" style="left:676px;top:249px;width:1px;height:365px;background:#7a8a99"></div>
<div class="a" style="left:350px;top:614px;width:343px;height:2px;background:#eeeeee"></div>
<div class="a" style="left:350px;top:613px;width:343px;height:1px;background:#7a8a99"></div>
<div class="a" style="left:677px;top:268px;width:15px;height:345px;background:#eeeeee;border-left:1px solid #7a8a99"></div>
<div class="a" style="left:678px;top:268px;width:14px;height:15px;background:#eeeeee;border-left:1px solid #fff;border-top:1px solid #fff"></div>
<svg style="left:681px;top:272px" width="9" height="6"><path d="M0.5 5.5L4.5 1.5L8.5 5.5z" fill="#222"/></svg>
<div class="a" style="left:677px;top:283px;width:15px;height:89px;background:linear-gradient(90deg,#c7d9ec,#ffffff 25%,#dde8f3 55%,#b8cfe5);border:1px solid #6382bf;border-right-color:#7a8a99"></div>
<svg style="left:680px;top:322px" width="10" height="8"><path d="M1 1.5h8M1 4h8M1 6.5h8" stroke="#6382bf" stroke-width="1"/></svg>
<div class="a" style="left:678px;top:598px;width:14px;height:15px;background:#eeeeee;border-left:1px solid #fff;border-top:1px solid #7a8a99"></div>
<svg style="left:681px;top:603px" width="9" height="6"><path d="M0.5 0.5L4.5 4.5L8.5 0.5z" fill="#222"/></svg>
<div class="a" style="left:692px;top:248px;width:1px;height:367px;background:#7a8a99"></div>
<div class="a" style="left:350px;top:616px;width:344px;height:27px;background:linear-gradient(#dde8f3 0%,#ffffff 30%,#dde8f3 60%,#b8cfe5 100%);border:1px solid #7a8a99"></div>
<div id="t84" class="t" style="left:473.50px;top:624.00px;font-family:'Liberation Sans',sans-serif;font-size:12.7px;color:#333;transform:scaleX(1.1340);transform-origin:50% 0;">Édition des notes</div>
<div class="a" style="left:352px;top:650px;width:341px;height:95px;border:1px solid #b8cfe5"></div>
<div class="a" style="left:356px;top:645px;width:48px;height:10px;background:#eeeeee"></div>
<div id="t85" class="t" style="left:358.00px;top:645.00px;font-family:'Liberation Sans',sans-serif;font-size:12.7px;color:#333;transform:scaleX(1.0238);transform-origin:0 0;">Calculs</div>
<div class="a" style="left:355px;top:660px;width:167px;height:27px;background:linear-gradient(#dde8f3 0%,#ffffff 30%,#dde8f3 60%,#b8cfe5 100%);border:1px solid #7a8a99"></div>
<div class="a" style="left:521px;top:660px;width:168px;height:27px;background:linear-gradient(#dde8f3 0%,#ffffff 30%,#dde8f3 60%,#b8cfe5 100%);border:1px solid #7a8a99"></div>
<div id="t86" class="t" style="left:409.00px;top:668.00px;font-family:'Liberation Sans',sans-serif;font-size:12.7px;color:#333;transform:scaleX(1.1356);transform-origin:50% 0;">Géométrie</div>
<div id="t87" class="t" style="left:588.50px;top:668.00px;font-family:'Liberation Sans',sans-serif;font-size:12.7px;color:#333;transform:scaleX(1.0588);transform-origin:50% 0;">Purge</div>
<div class="a" style="left:355px;top:687px;width:167px;height:27px;background:linear-gradient(#dde8f3 0%,#ffffff 30%,#dde8f3 60%,#b8cfe5 100%);border:1px solid #7a8a99"></div>
<div class="a" style="left:521px;top:687px;width:168px;height:27px;background:linear-gradient(#dde8f3 0%,#ffffff 30%,#dde8f3 60%,#b8cfe5 100%);border:1px solid #7a8a99"></div>
<div id="t88" class="t" style="left:406.00px;top:695.00px;font-family:'Liberation Sans',sans-serif;font-size:12.7px;color:#333;transform:scaleX(1.0923);transform-origin:50% 0;">-&gt;ProfilXYZ</div>
<div id="t89" class="t" style="left:576.50px;top:695.00px;font-family:'Liberation Sans',sans-serif;font-size:12.7px;color:#333;transform:scaleX(1.1034);transform-origin:50% 0;">-&gt;ProfilAC</div>
<div class="a" style="left:355px;top:714px;width:167px;height:27px;background:linear-gradient(#dde8f3 0%,#ffffff 30%,#dde8f3 60%,#b8cfe5 100%);border:1px solid #7a8a99"></div>
<div class="a" style="left:521px;top:714px;width:168px;height:27px;background:linear-gradient(#dde8f3 0%,#ffffff 30%,#dde8f3 60%,#b8cfe5 100%);border:1px solid #7a8a99"></div>
<div id="t90" class="t" style="left:409.00px;top:722.00px;font-family:'Liberation Sans',sans-serif;font-size:12.7px;color:#333;transform:scaleX(1.0847);transform-origin:50% 0;">DécalerPk</div>
<div id="t91" class="t" style="left:580.00px;top:722.00px;font-family:'Liberation Sans',sans-serif;font-size:12.7px;color:#333;transform:scaleX(1.1373);transform-origin:50% 0;">DécalerZ</div>
<div class="a" style="left:697px;top:182px;width:6px;height:570px;background:#eeeeee"></div>
<div class="a" style="left:698px;top:182px;width:2px;height:570px;background:#ffffff"></div>
<div class="a" style="left:703px;top:182px;width:2px;height:570px;background:#7a8a99"></div>
<div class="a" style="left:705px;top:182px;width:196px;height:247px;background:#eeeeee"></div>
<div class="a" style="left:706px;top:184px;width:160px;height:208px;background:#ffffff"></div>
<div id="t92" class="t" style="left:706.50px;top:186.00px;font-family:'Liberation Sans',sans-serif;font-size:12.7px;color:#333;transform:scaleX(0.9494);transform-origin:0 0;">Ordonnée (m)</div>
<svg style="left:0;top:0" width="1353" height="776"><line x1="751.0" y1="208.5" x2="751.0" y2="358.5" stroke="#c8c8c8" stroke-width="1"/><line x1="755.6" y1="208.5" x2="755.6" y2="358.5" stroke="#c8c8c8" stroke-width="1"/><line x1="760.2" y1="208.5" x2="760.2" y2="358.5" stroke="#c8c8c8" stroke-width="1"/><line x1="764.8" y1="208.5" x2="764.8" y2="358.5" stroke="#c8c8c8" stroke-width="1"/><line x1="769.4" y1="208.5" x2="769.4" y2="358.5" stroke="#c8c8c8" stroke-width="1"/><line x1="774.0" y1="208.5" x2="774.0" y2="358.5" stroke="#c8c8c8" stroke-width="1"/><line x1="778.6" y1="208.5" x2="778.6" y2="358.5" stroke="#c8c8c8" stroke-width="1"/><line x1="783.2" y1="208.5" x2="783.2" y2="358.5" stroke="#c8c8c8" stroke-width="1"/><line x1="787.8" y1="208.5" x2="787.8" y2="358.5" stroke="#c8c8c8" stroke-width="1"/><line x1="792.4" y1="208.5" x2="792.4" y2="358.5" stroke="#c8c8c8" stroke-width="1"/><line x1="797.0" y1="208.5" x2="797.0" y2="358.5" stroke="#c8c8c8" stroke-width="1"/><line x1="801.6" y1="208.5" x2="801.6" y2="358.5" stroke="#c8c8c8" stroke-width="1"/><line x1="806.2" y1="208.5" x2="806.2" y2="358.5" stroke="#c8c8c8" stroke-width="1"/><line x1="810.8" y1="208.5" x2="810.8" y2="358.5" stroke="#c8c8c8" stroke-width="1"/><line x1="815.4" y1="208.5" x2="815.4" y2="358.5" stroke="#c8c8c8" stroke-width="1"/><line x1="820.0" y1="208.5" x2="820.0" y2="358.5" stroke="#c8c8c8" stroke-width="1"/><line x1="824.6" y1="208.5" x2="824.6" y2="358.5" stroke="#c8c8c8" stroke-width="1"/><line x1="829.2" y1="208.5" x2="829.2" y2="358.5" stroke="#c8c8c8" stroke-width="1"/><line x1="833.8" y1="208.5" x2="833.8" y2="358.5" stroke="#c8c8c8" stroke-width="1"/><line x1="838.4" y1="208.5" x2="838.4" y2="358.5" stroke="#c8c8c8" stroke-width="1"/><line x1="843.0" y1="208.5" x2="843.0" y2="358.5" stroke="#c8c8c8" stroke-width="1"/><line x1="847.6" y1="208.5" x2="847.6" y2="358.5" stroke="#c8c8c8" stroke-width="1"/><line x1="749" y1="224.5" x2="851" y2="224.5" stroke="#c8c8c8" stroke-width="1"/><line x1="749" y1="242.6" x2="851" y2="242.6" stroke="#c8c8c8" stroke-width="1"/><line x1="749" y1="260.7" x2="851" y2="260.7" stroke="#c8c8c8" stroke-width="1"/><line x1="749" y1="278.8" x2="851" y2="278.8" stroke="#c8c8c8" stroke-width="1"/><line x1="749" y1="297" x2="851" y2="297" stroke="#c8c8c8" stroke-width="1"/><line x1="749" y1="315.2" x2="851" y2="315.2" stroke="#c8c8c8" stroke-width="1"/><line x1="749" y1="333.5" x2="851" y2="333.5" stroke="#c8c8c8" stroke-width="1"/><line x1="749" y1="351.6" x2="851" y2="351.6" stroke="#c8c8c8" stroke-width="1"/><line x1="851" y1="208.5" x2="851" y2="358.5" stroke="#c8c8c8"/><line x1="749" y1="208.5" x2="851" y2="208.5" stroke="#c8c8c8"/><polyline points="757,262 772,246 793,234 811.6,225 823,217 832.4,216 839.4,223 840,241 834,264.6 832,283 838,299.4 843,318 842,334 827.8,343.5 804.6,349.3 793,351.6" fill="none" stroke="#ff0000" stroke-width="9" stroke-linejoin="round" stroke-linecap="round"/><path d="M752.7 260.9h7M756.2 257.4v7M755.6 263.6h7M759.1 260.1v7M750.9 257.7h7M754.4 254.2v7M755.1 258.7h7M758.6 255.2v7M760.0 262.9h7M763.5 259.4v7M757.8 259.3h7M761.3 255.8v7M751.4 251.6h7M754.9 248.1v7M761.9 259.6h7M765.4 256.1v7M753.5 249.1h7M757.0 245.6v7M753.8 248.4h7M757.3 244.9v7M763.0 254.1h7M766.5 250.6v7M761.7 252.9h7M765.2 249.4v7M763.9 253.3h7M767.4 249.8v7M765.7 252.0h7M769.2 248.5v7M766.9 252.0h7M770.4 248.5v7M769.7 253.8h7M773.2 250.3v7M764.2 247.9h7M767.7 244.4v7M766.1 247.7h7M769.6 244.2v7M765.8 245.5h7M769.3 242.0v7M766.2 241.6h7M769.7 238.1v7M767.9 241.5h7M771.4 238.0v7M771.5 245.8h7M775.0 242.3v7M771.7 244.5h7M775.2 241.0v7M776.5 249.2h7M780.0 245.7v7M774.1 242.2h7M777.6 238.7v7M771.7 239.3h7M775.2 235.8v7M771.1 235.7h7M774.6 232.2v7M778.6 245.2h7M782.1 241.7v7M781.7 247.1h7M785.2 243.6v7M779.6 241.8h7M783.1 238.3v7M781.4 242.3h7M784.9 238.8v7M779.1 236.3h7M782.6 232.8v7M779.6 233.9h7M783.1 230.4v7M781.9 235.2h7M785.4 231.7v7M779.0 231.3h7M782.5 227.8v7M785.5 237.7h7M789.0 234.2v7M781.2 227.4h7M784.7 223.9v7M779.6 224.6h7M783.1 221.1v7M783.8 230.6h7M787.3 227.1v7M791.0 239.0h7M794.5 235.5v7M789.3 235.5h7M792.8 232.0v7M792.0 235.3h7M795.5 231.8v7M792.5 235.5h7M796.0 232.0v7M794.5 234.7h7M798.0 231.2v7M795.9 236.4h7M799.4 232.9v7M796.6 233.6h7M800.1 230.1v7M797.2 235.1h7M800.7 231.6v7M792.5 222.1h7M796.0 218.6v7M795.6 223.5h7M799.1 220.0v7M801.8 237.3h7M805.3 233.8v7M800.1 230.8h7M803.6 227.3v7M802.3 231.6h7M805.8 228.1v7M799.5 225.3h7M803.0 221.8v7M801.8 225.6h7M805.3 222.1v7M802.8 222.5h7M806.3 219.0v7M807.5 230.8h7M811.0 227.3v7M803.2 219.4h7M806.7 215.9v7M806.0 225.3h7M809.5 221.8v7M812.9 230.5h7M816.4 227.0v7M806.5 219.6h7M810.0 216.1v7M807.0 220.8h7M810.5 217.3v7M813.1 225.5h7M816.6 222.0v7M812.5 224.1h7M816.0 220.6v7M812.7 222.7h7M816.2 219.2v7M812.5 220.8h7M816.0 217.3v7M815.0 221.9h7M818.5 218.4v7M817.2 223.5h7M820.7 220.0v7M819.0 221.0h7M822.5 217.5v7M815.9 216.8h7M819.4 213.3v7M817.2 216.3h7M820.7 212.8v7M820.0 215.2h7M823.5 211.7v7M821.9 218.8h7M825.4 215.3v7M820.4 211.0h7M823.9 207.5v7M822.4 218.0h7M825.9 214.5v7M824.6 214.2h7M828.1 210.7v7M825.1 219.8h7M828.6 216.3v7M827.9 228.8h7M831.4 225.3v7M827.2 218.0h7M830.7 214.5v7M829.8 215.2h7M833.3 211.7v7M830.7 217.3h7M834.2 213.8v7M826.6 221.1h7M830.1 217.6v7M835.6 214.1h7M839.1 210.6v7M829.3 222.7h7M832.8 219.2v7M828.2 226.3h7M831.7 222.8v7M835.8 220.4h7M839.3 216.9v7M833.4 225.1h7M836.9 221.6v7M830.3 223.8h7M833.8 220.3v7M843.5 224.4h7M847.0 220.9v7M835.1 225.0h7M838.6 221.5v7M829.8 225.6h7M833.3 222.1v7M831.9 227.2h7M835.4 223.7v7M835.4 229.0h7M838.9 225.5v7M830.7 230.8h7M834.2 227.3v7M837.7 231.8h7M841.2 228.3v7M831.4 231.6h7M834.9 228.1v7M837.6 232.5h7M841.1 229.0v7M835.1 234.5h7M838.6 231.0v7M833.0 236.3h7M836.5 232.8v7M833.2 236.9h7M836.7 233.4v7M841.4 238.1h7M844.9 234.6v7M829.9 239.8h7M833.4 236.3v7M832.6 240.6h7M836.1 237.1v7M836.7 240.4h7M840.2 236.9v7M841.8 244.1h7M845.3 240.6v7M840.2 245.2h7M843.7 241.7v7M827.9 242.0h7M831.4 238.5v7M844.5 248.3h7M848.0 244.8v7M828.2 243.9h7M831.7 240.4v7M832.7 247.7h7M836.2 244.2v7M832.4 248.6h7M835.9 245.1v7M828.4 249.1h7M831.9 245.6v7M826.5 249.1h7M830.0 245.6v7M837.7 252.0h7M841.2 248.5v7M828.6 250.6h7M832.1 247.1v7M826.0 252.1h7M829.5 248.6v7M834.1 256.1h7M837.6 252.6v7M841.9 259.0h7M845.4 255.5v7M828.4 255.5h7M831.9 252.0v7M832.3 257.7h7M835.8 254.2v7M827.6 258.3h7M831.1 254.8v7M832.1 259.7h7M835.6 256.2v7M825.9 260.8h7M829.4 257.3v7M834.4 263.5h7M837.9 260.0v7M826.1 263.2h7M829.6 259.7v7M840.6 265.7h7M844.1 262.2v7M824.8 265.2h7M828.3 261.7v7M831.3 266.9h7M834.8 263.4v7M830.3 267.4h7M833.8 263.9v7M820.8 267.5h7M824.3 264.0v7M829.7 270.3h7M833.2 266.8v7M830.8 271.3h7M834.3 267.8v7M836.1 273.4h7M839.6 269.9v7M838.1 273.9h7M841.6 270.4v7M832.5 275.4h7M836.0 271.9v7M829.2 276.6h7M832.7 273.1v7M825.0 276.8h7M828.5 273.3v7M837.0 280.1h7M840.5 276.6v7M832.2 279.8h7M835.7 276.3v7M833.4 281.2h7M836.9 277.7v7M832.6 282.7h7M836.1 279.2v7M834.2 280.9h7M837.7 277.4v7M827.4 285.6h7M830.9 282.1v7M832.7 284.9h7M836.2 281.4v7M839.0 282.4h7M842.5 278.9v7M841.2 284.0h7M844.7 280.5v7M834.5 286.2h7M838.0 282.7v7M826.8 290.2h7M830.3 286.7v7M827.5 291.5h7M831.0 288.0v7M825.4 294.7h7M828.9 291.2v7M829.2 294.8h7M832.7 291.3v7M828.2 295.8h7M831.7 292.3v7M826.3 296.7h7M829.8 293.2v7M823.6 299.1h7M827.1 295.6v7M842.6 294.9h7M846.1 291.4v7M839.0 297.6h7M842.5 294.1v7M831.2 301.0h7M834.7 297.5v7M832.0 301.3h7M835.5 297.8v7M830.5 302.5h7M834.0 299.0v7M834.0 303.5h7M837.5 300.0v7M831.3 304.0h7M834.8 300.5v7M840.8 302.6h7M844.3 299.1v7M838.0 305.2h7M841.5 301.7v7M840.6 305.1h7M844.1 301.6v7M841.3 308.0h7M844.8 304.5v7M833.7 309.3h7M837.2 305.8v7M844.5 306.4h7M848.0 302.9v7M829.2 313.3h7M832.7 309.8v7M835.7 312.4h7M839.2 308.9v7M844.5 311.6h7M848.0 308.1v7M833.3 315.6h7M836.8 312.1v7M832.3 317.7h7M835.8 314.2v7M830.2 319.7h7M833.7 316.2v7M838.0 318.3h7M841.5 314.8v7M838.5 318.9h7M842.0 315.4v7M828.3 319.9h7M831.8 316.4v7M833.9 321.7h7M837.4 318.2v7M830.4 321.2h7M833.9 317.7v7M834.0 324.1h7M837.5 320.6v7M843.6 325.2h7M847.1 321.7v7M837.6 326.8h7M841.1 323.3v7M839.2 327.2h7M842.7 323.7v7M836.2 327.6h7M839.7 324.1v7M836.5 328.4h7M840.0 324.9v7M836.8 329.9h7M840.3 326.4v7M840.3 332.3h7M843.8 328.8v7M834.5 332.2h7M838.0 328.7v7M840.6 336.5h7M844.1 333.0v7M838.4 334.1h7M841.9 330.6v7M836.2 335.5h7M839.7 332.0v7M835.1 335.2h7M838.6 331.7v7M832.8 335.2h7M836.3 331.7v7M831.4 332.2h7M834.9 328.7v7M831.5 335.9h7M835.0 332.4v7M834.1 343.0h7M837.6 339.5v7M833.3 343.3h7M836.8 339.8v7M827.0 337.0h7M830.5 333.5v7M831.7 345.1h7M835.2 341.6v7M823.3 334.3h7M826.8 330.8v7M830.1 344.4h7M833.6 340.9v7M825.3 339.6h7M828.8 336.1v7M821.4 336.2h7M824.9 332.7v7M824.1 339.8h7M827.6 336.3v7M820.4 335.6h7M823.9 332.1v7M820.5 339.2h7M824.0 335.7v7M821.6 345.0h7M825.1 341.5v7M819.0 340.9h7M822.5 337.4v7M818.5 341.8h7M822.0 338.3v7M815.6 340.8h7M819.1 337.3v7M815.5 339.1h7M819.0 335.6v7M814.8 347.0h7M818.3 343.5v7M815.8 347.5h7M819.3 344.0v7M812.4 341.8h7M815.9 338.3v7M814.2 352.3h7M817.7 348.8v7M810.8 345.9h7M814.3 342.4v7M809.7 342.9h7M813.2 339.4v7M809.0 347.2h7M812.5 343.7v7M807.8 346.5h7M811.3 343.0v7M807.1 347.5h7M810.6 344.0v7M806.4 353.6h7M809.9 350.1v7M804.9 351.7h7M808.4 348.2v7M804.1 350.9h7M807.6 347.4v7M805.1 359.1h7M808.6 355.6v7M800.1 346.5h7M803.6 343.0v7M799.7 349.9h7M803.2 346.4v7M796.2 340.6h7M799.7 337.1v7M796.8 347.4h7M800.3 343.9v7M797.4 351.0h7M800.9 347.5v7M797.1 359.7h7M800.6 356.2v7M795.5 360.5h7M799.0 357.0v7M792.4 351.3h7M795.9 347.8v7M793.3 360.5h7M796.8 357.0v7M791.4 356.9h7M794.9 353.4v7" stroke="#ff0000" stroke-width="1.3" fill="none"/><line x1="789" y1="348" x2="800" y2="355" stroke="#000" stroke-width="3"/><line x1="749" y1="358.5" x2="749" y2="205" stroke="#000" stroke-width="1.3"/><path d="M745 211L749 204.5L753 211" fill="none" stroke="#000" stroke-width="1.2"/><line x1="749" y1="358.5" x2="855" y2="358.5" stroke="#000" stroke-width="1.3"/><path d="M849 354.5L855.5 358.5L849 362.5" fill="none" stroke="#000" stroke-width="1.2"/><line x1="743" y1="224.5" x2="749" y2="224.5" stroke="#000" stroke-width="1.3"/><line x1="743" y1="260.7" x2="749" y2="260.7" stroke="#000" stroke-width="1.3"/><line x1="743" y1="297" x2="749" y2="297" stroke="#000" stroke-width="1.3"/><line x1="743" y1="333.5" x2="749" y2="333.5" stroke="#000" stroke-width="1.3"/><line x1="751.0" y1="358.5" x2="751.0" y2="363.5" stroke="#000" stroke-width="1.2"/><line x1="755.6" y1="358.5" x2="755.6" y2="363.5" stroke="#000" stroke-width="1.2"/><line x1="760.2" y1="358.5" x2="760.2" y2="363.5" stroke="#000" stroke-width="1.2"/><line x1="764.8" y1="358.5" x2="764.8" y2="363.5" stroke="#000" stroke-width="1.2"/><line x1="769.4" y1="358.5" x2="769.4" y2="363.5" stroke="#000" stroke-width="1.2"/><line x1="774.0" y1="358.5" x2="774.0" y2="363.5" stroke="#000" stroke-width="1.2"/><line x1="778.6" y1="358.5" x2="778.6" y2="363.5" stroke="#000" stroke-width="1.2"/><line x1="783.2" y1="358.5" x2="783.2" y2="363.5" stroke="#000" stroke-width="1.2"/><line x1="787.8" y1="358.5" x2="787.8" y2="363.5" stroke="#000" stroke-width="1.2"/><line x1="792.4" y1="358.5" x2="792.4" y2="363.5" stroke="#000" stroke-width="1.2"/><line x1="797.0" y1="358.5" x2="797.0" y2="363.5" stroke="#000" stroke-width="1.2"/><line x1="801.6" y1="358.5" x2="801.6" y2="363.5" stroke="#000" stroke-width="1.2"/><line x1="806.2" y1="358.5" x2="806.2" y2="363.5" stroke="#000" stroke-width="1.2"/><line x1="810.8" y1="358.5" x2="810.8" y2="363.5" stroke="#000" stroke-width="1.2"/><line x1="815.4" y1="358.5" x2="815.4" y2="363.5" stroke="#000" stroke-width="1.2"/><line x1="820.0" y1="358.5" x2="820.0" y2="363.5" stroke="#000" stroke-width="1.2"/><line x1="824.6" y1="358.5" x2="824.6" y2="363.5" stroke="#000" stroke-width="1.2"/><line x1="829.2" y1="358.5" x2="829.2" y2="363.5" stroke="#000" stroke-width="1.2"/><line x1="833.8" y1="358.5" x2="833.8" y2="363.5" stroke="#000" stroke-width="1.2"/><line x1="838.4" y1="358.5" x2="838.4" y2="363.5" stroke="#000" stroke-width="1.2"/><line x1="843.0" y1="358.5" x2="843.0" y2="363.5" stroke="#000" stroke-width="1.2"/><line x1="847.6" y1="358.5" x2="847.6" y2="363.5" stroke="#000" stroke-width="1.2"/></svg>
<div id="t93" class="t" style="right:609.50px;top:204.00px;font-family:'Liberation Sans',sans-serif;font-size:12.7px;color:#111;transform:scaleX(1.1300);transform-origin:100% 0;">4 461</div>
<div id="t94" class="t" style="right:609.50px;top:220.00px;font-family:'Liberation Sans',sans-serif;font-size:12.7px;color:#111;transform:scaleX(1.1300);transform-origin:100% 0;">4 000</div>
<div id="t95" class="t" style="right:609.50px;top:256.00px;font-family:'Liberation Sans',sans-serif;font-size:12.7px;color:#111;transform:scaleX(1.1300);transform-origin:100% 0;">3 000</div>
<div id="t96" class="t" style="right:609.50px;top:292.00px;font-family:'Liberation Sans',sans-serif;font-size:12.7px;color:#111;transform:scaleX(1.1300);transform-origin:100% 0;">2 000</div>
<div id="t97" class="t" style="right:609.50px;top:328.00px;font-family:'Liberation Sans',sans-serif;font-size:12.7px;color:#111;transform:scaleX(1.1300);transform-origin:100% 0;">1 000</div>
<div id="t98" class="t" style="right:610.50px;top:354.00px;font-family:'Liberation Sans',sans-serif;font-size:12.7px;color:#111;transform:scaleX(1.1000);transform-origin:100% 0;">317</div>
<div id="t99" class="t" style="left:737.00px;top:362.00px;font-family:'Liberation Sans',sans-serif;font-size:12.7px;color:#111;transform:scaleX(1.1000);transform-origin:0 0;">529</div>
<div id="t100" class="t" style="left:770.00px;top:362.00px;font-family:'Liberation Sans',sans-serif;font-size:12.7px;color:#111;transform:scaleX(1.1000);transform-origin:0 0;">1 400</div>
<div id="t101" class="t" style="left:816.00px;top:362.00px;font-family:'Liberation Sans',sans-serif;font-size:12.7px;color:#111;transform:scaleX(1.1000);transform-origin:0 0;">2 400</div>
<div id="t102" class="t" style="left:744.00px;top:378.00px;font-family:'Liberation Sans',sans-serif;font-size:12.7px;color:#333;transform:scaleX(1.0822);transform-origin:0 0;">Abscisse (m)</div>
<div class="a" style="left:866px;top:184px;width:30px;height:208px;background:#eeeeee"></div>
<svg style="left:870px;top:187px" width="25" height="25" viewBox="0 0 25 25"><defs><radialGradient id="mg" cx="0.4" cy="0.35" r="0.75"><stop offset="0" stop-color="#f4fcff"/><stop offset="0.6" stop-color="#a8dcf4"/><stop offset="1" stop-color="#5aa8d8"/></radialGradient></defs><path d="M15.5 15.5l5.5 5.5" stroke="#3a1a0a" stroke-width="6.2" stroke-linecap="round"/><path d="M15.8 15.8l5 5" stroke="#e0501a" stroke-width="4.2" stroke-linecap="round"/><path d="M16.5 16l3 3" stroke="#ff9060" stroke-width="1.2" stroke-linecap="round"/><circle cx="9.5" cy="9.5" r="8.2" fill="#888" stroke="#222" stroke-width="1.3"/><circle cx="9.5" cy="9.5" r="6.6" fill="url(#mg)" stroke="#ddd" stroke-width="0.9"/><path d="M5.5 9.5h8M9.5 5.5v8" stroke="#7a4a00" stroke-width="3.6" stroke-linecap="round"/><path d="M5.5 9.5h8M9.5 5.5v8" stroke="#ffd21a" stroke-width="2" stroke-linecap="round"/></svg>
<svg style="left:870px;top:217px" width="25" height="25" viewBox="0 0 25 25"><defs><radialGradient id="mg" cx="0.4" cy="0.35" r="0.75"><stop offset="0" stop-color="#f4fcff"/><stop offset="0.6" stop-color="#a8dcf4"/><stop offset="1" stop-color="#5aa8d8"/></radialGradient></defs><path d="M15.5 15.5l5.5 5.5" stroke="#3a1a0a" stroke-width="6.2" stroke-linecap="round"/><path d="M15.8 15.8l5 5" stroke="#e0501a" stroke-width="4.2" stroke-linecap="round"/><path d="M16.5 16l3 3" stroke="#ff9060" stroke-width="1.2" stroke-linecap="round"/><circle cx="9.5" cy="9.5" r="8.2" fill="#888" stroke="#222" stroke-width="1.3"/><circle cx="9.5" cy="9.5" r="6.6" fill="url(#mg)" stroke="#ddd" stroke-width="0.9"/><path d="M5.5 9.5h8" stroke="#7a4a00" stroke-width="3.6" stroke-linecap="round"/><path d="M5.5 9.5h8" stroke="#ffd21a" stroke-width="2" stroke-linecap="round"/></svg>
<svg style="left:870px;top:247px" width="25" height="25" viewBox="0 0 25 25"><defs><radialGradient id="mg" cx="0.4" cy="0.35" r="0.75"><stop offset="0" stop-color="#f4fcff"/><stop offset="0.6" stop-color="#a8dcf4"/><stop offset="1" stop-color="#5aa8d8"/></radialGradient></defs><path d="M15.5 15.5l5.5 5.5" stroke="#3a1a0a" stroke-width="6.2" stroke-linecap="round"/><path d="M15.8 15.8l5 5" stroke="#e0501a" stroke-width="4.2" stroke-linecap="round"/><path d="M16.5 16l3 3" stroke="#ff9060" stroke-width="1.2" stroke-linecap="round"/><circle cx="9.5" cy="9.5" r="8.2" fill="#888" stroke="#222" stroke-width="1.3"/><circle cx="9.5" cy="9.5" r="6.6" fill="url(#mg)" stroke="#ddd" stroke-width="0.9"/><path d="M6.5 8.3V6.5H8.3M10.7 6.5h1.8V8.3M12.5 10.7v1.8h-1.8M8.3 12.5H6.5v-1.8" fill="none" stroke="#0a3a80" stroke-width="1.4"/></svg>
<svg style="left:870px;top:277px" width="25" height="25" viewBox="0 0 25 25"><defs><radialGradient id="mg" cx="0.4" cy="0.35" r="0.75"><stop offset="0" stop-color="#f4fcff"/><stop offset="0.6" stop-color="#a8dcf4"/><stop offset="1" stop-color="#5aa8d8"/></radialGradient></defs><path d="M15.5 15.5l5.5 5.5" stroke="#3a1a0a" stroke-width="6.2" stroke-linecap="round"/><path d="M15.8 15.8l5 5" stroke="#e0501a" stroke-width="4.2" stroke-linecap="round"/><path d="M16.5 16l3 3" stroke="#ff9060" stroke-width="1.2" stroke-linecap="round"/><circle cx="9.5" cy="9.5" r="8.2" fill="#888" stroke="#222" stroke-width="1.3"/><circle cx="9.5" cy="9.5" r="6.6" fill="url(#mg)" stroke="#ddd" stroke-width="0.9"/><text x="9.6" y="12.2" font-family="Liberation Sans" font-size="7" font-weight="bold" text-anchor="middle" fill="#0a3a80">1:1</text></svg>
<svg style="left:871px;top:308px" width="24" height="21" viewBox="0 0 24 21"><defs><linearGradient id="prg" x1="0" y1="0" x2="0" y2="1"><stop offset="0" stop-color="#ffffff"/><stop offset="1" stop-color="#9aa4ac"/></linearGradient></defs><rect x="6.5" y="0.5" width="11" height="7" fill="#fff" stroke="#333"/><path d="M8 3h8M8 5h6" stroke="#999" stroke-width="0.7"/><path d="M1 10c0-2 1.5-3.5 3.5-3.5h15c2 0 3.5 1.5 3.5 3.5v7c0 2-1 3.5-3 3.5H4c-2 0-3-1.5-3-3.5z" fill="url(#prg)" stroke="#333" stroke-width="1"/><path d="M4 8.5h16l-2 4H6z" fill="#2a8ae0"/><rect x="3" y="14.5" width="2" height="1.5" fill="#20a020"/><rect x="5.5" y="14.5" width="2" height="1.5" fill="#e02020"/></svg>
<div class="a" style="left:706px;top:392px;width:192px;height:31px;background:linear-gradient(#ffffff,#f4f4f4 40%,#dcdcdc)"></div>
<div class="a" style="left:707px;top:393px;width:12px;height:29px;background:#f4f4f4"></div>
<svg style="left:708px;top:394px" width="10" height="27"><defs><pattern id="gripp" width="4" height="4" patternUnits="userSpaceOnUse"><rect x="0" y="0" width="1" height="1" fill="#ffffff"/><rect x="2" y="2" width="1" height="1" fill="#ffffff"/><rect x="1" y="1" width="1" height="1" fill="#8a9aaa"/><rect x="3" y="3" width="1" height="1" fill="#8a9aaa"/></pattern></defs><rect width="10" height="27" fill="url(#gripp)"/></svg>
<div class="a" style="left:722px;top:393px;width:28px;height:28px;background:#eeeeee"></div>
<svg style="left:727px;top:397px" width="20" height="20" viewBox="0 0 20 20"><path d="M3 16l1.5-5L12 1.5l3 2-7.5 9.5z" fill="#f0a030" stroke="#111" stroke-width="1.1"/><path d="M3 16c2 1 3-2 5-1.5s3 2.5 5 2 3-2 5-3" fill="none" stroke="#111" stroke-width="1.1"/></svg>
<svg style="left:753px;top:400px" width="18" height="14" viewBox="0 0 18 14"><path d="M1 1h11l5.5 6-5.5 6H1z" fill="#111"/><path d="M4.5 4l5 6M9.5 4l-5 6" stroke="#fff" stroke-width="1.8"/></svg>
<div class="a" style="left:772px;top:393px;width:49px;height:28px;background:#eeeeee;border:1px solid #b8cfe5"></div>
<div class="a" style="left:821px;top:393px;width:25px;height:28px;background:#eeeeee;border:1px solid #b8cfe5"></div>
<div class="a" style="left:846px;top:393px;width:47px;height:28px;background:#eeeeee;border:1px solid #b8cfe5"></div>
<div id="t103" class="t" style="left:774.00px;top:401.00px;font-family:'Liberation Sans',sans-serif;font-size:12.7px;color:#333;transform:scaleX(1.0750);transform-origin:0 0;">graphe</div>
<div id="t104" class="t" style="left:823.00px;top:401.00px;font-family:'Liberation Sans',sans-serif;font-size:12.7px;color:#333;transform:scaleX(1.0000);transform-origin:0 0;">eur</div>
<div id="t105" class="t" style="left:849.00px;top:401.00px;font-family:'Liberation Sans',sans-serif;font-size:12.7px;color:#333;transform:scaleX(1.2667);transform-origin:0 0;">ulées</div>
<div class="a" style="left:706px;top:423px;width:192px;height:2px;background:#eeeeee"></div>
<div class="a" style="left:897px;top:182px;width:3px;height:247px;background:#ffffff"></div>
<div class="a" style="left:900px;top:182px;width:1px;height:247px;background:#7a8a99"></div>
<div class="a" style="left:705px;top:425px;width:629px;height:4px;background:#eeeeee"></div>
<div class="a" style="left:705px;top:426px;width:629px;height:2px;background:#ffffff"></div>
<div class="a" style="left:705px;top:428px;width:629px;height:2px;background:#7a8a99"></div>
<div class="a" style="left:901px;top:184px;width:400px;height:241px;background:#ffffff"></div>
<div id="t106" class="t" style="left:901.50px;top:186.00px;font-family:'Liberation Sans',sans-serif;font-size:12.7px;color:#333;transform:scaleX(1.0816);transform-origin:0 0;">Cote (m)</div>
<svg style="left:0;top:0" width="1353" height="776"><line x1="932" y1="388.5" x2="1286" y2="388.5" stroke="#d9d9d9" stroke-width="1"/><line x1="932" y1="384.5" x2="1286" y2="384.5" stroke="#bdbdbd" stroke-width="1"/><line x1="932" y1="380.5" x2="1286" y2="380.5" stroke="#d9d9d9" stroke-width="1"/><line x1="932" y1="377.5" x2="1286" y2="377.5" stroke="#bdbdbd" stroke-width="1"/><line x1="932" y1="373.5" x2="1286" y2="373.5" stroke="#d9d9d9" stroke-width="1"/><line x1="932" y1="369.5" x2="1286" y2="369.5" stroke="#bdbdbd" stroke-width="1"/><line x1="932" y1="365.5" x2="1286" y2="365.5" stroke="#d9d9d9" stroke-width="1"/><line x1="932" y1="361.5" x2="1286" y2="361.5" stroke="#bdbdbd" stroke-width="1"/><line x1="932" y1="357.5" x2="1286" y2="357.5" stroke="#d9d9d9" stroke-width="1"/><line x1="932" y1="353.5" x2="1286" y2="353.5" stroke="#bdbdbd" stroke-width="1"/><line x1="932" y1="349.5" x2="1286" y2="349.5" stroke="#d9d9d9" stroke-width="1"/><line x1="932" y1="345.5" x2="1286" y2="345.5" stroke="#bdbdbd" stroke-width="1"/><line x1="932" y1="342.5" x2="1286" y2="342.5" stroke="#d9d9d9" stroke-width="1"/><line x1="932" y1="338.5" x2="1286" y2="338.5" stroke="#bdbdbd" stroke-width="1"/><line x1="932" y1="334.5" x2="1286" y2="334.5" stroke="#d9d9d9" stroke-width="1"/><line x1="932" y1="330.5" x2="1286" y2="330.5" stroke="#bdbdbd" stroke-width="1"/><line x1="932" y1="326.5" x2="1286" y2="326.5" stroke="#d9d9d9" stroke-width="1"/><line x1="932" y1="322.5" x2="1286" y2="322.5" stroke="#bdbdbd" stroke-width="1"/><line x1="932" y1="318.5" x2="1286" y2="318.5" stroke="#d9d9d9" stroke-width="1"/><line x1="932" y1="314.5" x2="1286" y2="314.5" stroke="#bdbdbd" stroke-width="1"/><line x1="932" y1="310.5" x2="1286" y2="310.5" stroke="#d9d9d9" stroke-width="1"/><line x1="932" y1="306.5" x2="1286" y2="306.5" stroke="#bdbdbd" stroke-width="1"/><line x1="932" y1="302.5" x2="1286" y2="302.5" stroke="#d9d9d9" stroke-width="1"/><line x1="932" y1="299.5" x2="1286" y2="299.5" stroke="#bdbdbd" stroke-width="1"/><line x1="932" y1="295.5" x2="1286" y2="295.5" stroke="#d9d9d9" stroke-width="1"/><line x1="932" y1="291.5" x2="1286" y2="291.5" stroke="#bdbdbd" stroke-width="1"/><line x1="932" y1="287.5" x2="1286" y2="287.5" stroke="#d9d9d9" stroke-width="1"/><line x1="932" y1="283.5" x2="1286" y2="283.5" stroke="#bdbdbd" stroke-width="1"/><line x1="932" y1="279.5" x2="1286" y2="279.5" stroke="#d9d9d9" stroke-width="1"/><line x1="932" y1="275.5" x2="1286" y2="275.5" stroke="#bdbdbd" stroke-width="1"/><line x1="932" y1="271.5" x2="1286" y2="271.5" stroke="#d9d9d9" stroke-width="1"/><line x1="932" y1="267.5" x2="1286" y2="267.5" stroke="#bdbdbd" stroke-width="1"/><line x1="932" y1="264.5" x2="1286" y2="264.5" stroke="#d9d9d9" stroke-width="1"/><line x1="932" y1="260.5" x2="1286" y2="260.5" stroke="#bdbdbd" stroke-width="1"/><line x1="932" y1="256.5" x2="1286" y2="256.5" stroke="#d9d9d9" stroke-width="1"/><line x1="932" y1="252.5" x2="1286" y2="252.5" stroke="#bdbdbd" stroke-width="1"/><line x1="932" y1="248.5" x2="1286" y2="248.5" stroke="#d9d9d9" stroke-width="1"/><line x1="932" y1="244.5" x2="1286" y2="244.5" stroke="#bdbdbd" stroke-width="1"/><line x1="932" y1="240.5" x2="1286" y2="240.5" stroke="#d9d9d9" stroke-width="1"/><line x1="932" y1="236.5" x2="1286" y2="236.5" stroke="#bdbdbd" stroke-width="1"/><line x1="932" y1="232.5" x2="1286" y2="232.5" stroke="#d9d9d9" stroke-width="1"/><line x1="932" y1="228.5" x2="1286" y2="228.5" stroke="#bdbdbd" stroke-width="1"/><line x1="932" y1="225.5" x2="1286" y2="225.5" stroke="#d9d9d9" stroke-width="1"/><line x1="932" y1="221.5" x2="1286" y2="221.5" stroke="#bdbdbd" stroke-width="1"/><line x1="932" y1="217.5" x2="1286" y2="217.5" stroke="#d9d9d9" stroke-width="1"/><line x1="932" y1="213.5" x2="1286" y2="213.5" stroke="#bdbdbd" stroke-width="1"/><line x1="932" y1="209.5" x2="1286" y2="209.5" stroke="#d9d9d9" stroke-width="1"/><line x1="939.5" y1="208.5" x2="939.5" y2="390.2" stroke="#bdbdbd" stroke-width="1"/><line x1="963.5" y1="208.5" x2="963.5" y2="390.2" stroke="#bdbdbd" stroke-width="1"/><line x1="987.5" y1="208.5" x2="987.5" y2="390.2" stroke="#bdbdbd" stroke-width="1"/><line x1="1010.5" y1="208.5" x2="1010.5" y2="390.2" stroke="#bdbdbd" stroke-width="1"/><line x1="1034.5" y1="208.5" x2="1034.5" y2="390.2" stroke="#bdbdbd" stroke-width="1"/><line x1="1058.5" y1="208.5" x2="1058.5" y2="390.2" stroke="#bdbdbd" stroke-width="1"/><line x1="1082.5" y1="208.5" x2="1082.5" y2="390.2" stroke="#bdbdbd" stroke-width="1"/><line x1="1105.5" y1="208.5" x2="1105.5" y2="390.2" stroke="#bdbdbd" stroke-width="1"/><line x1="1129.5" y1="208.5" x2="1129.5" y2="390.2" stroke="#bdbdbd" stroke-width="1"/><line x1="1153.5" y1="208.5" x2="1153.5" y2="390.2" stroke="#bdbdbd" stroke-width="1"/><line x1="1177.5" y1="208.5" x2="1177.5" y2="390.2" stroke="#bdbdbd" stroke-width="1"/><line x1="1200.5" y1="208.5" x2="1200.5" y2="390.2" stroke="#bdbdbd" stroke-width="1"/><line x1="1224.5" y1="208.5" x2="1224.5" y2="390.2" stroke="#bdbdbd" stroke-width="1"/><line x1="1248.5" y1="208.5" x2="1248.5" y2="390.2" stroke="#bdbdbd" stroke-width="1"/><line x1="1272.5" y1="208.5" x2="1272.5" y2="390.2" stroke="#bdbdbd" stroke-width="1"/><line x1="1286.5" y1="208.5" x2="1286.5" y2="390.2" stroke="#bdbdbd"/><line x1="932" y1="209.0" x2="1286" y2="209.0" stroke="#bdbdbd"/><path d="M939.6 318.7V385.5M944.3 316.9V382.8M948.4 316.9V380.5M953.4 311.9V383.5M958.4 314.9V373.5M963.4 313.1V376.0M968.5 321.2V376.7M972.2 308.8V377.2M977.3 305.8V374.7M982.3 305.8V371.6M987.3 296.8V368.4M991.6 274.2V371.7M996.6 281.7V372.9M1001.6 265.9V371.7M1006.2 267.9V383.4M1010.4 298.0V373.6M1015.5 286.7V383.0M1020.5 266.6V376.0M1025.5 286.0V371.7M1029.3 306.8V373.0M1034.3 275.9V371.7M1039.4 281.7V374.2M1044.4 283.0V368.4M1048.1 303.6V369.4M1053.2 296.8V365.9M1058.2 296.8V360.9M1063.2 288.5V358.4M1068.3 291.8V359.1M1072.5 294.8V359.6M1077.6 291.0V360.1M1082.6 285.0V359.7M1087.6 262.8V357.9M1091.6 291.8V357.9M1096.7 286.7V357.9M1101.7 288.0V357.9M1106.0 234.7V357.9M1106.3 235.2V357.8M1110.6 238.2V355.3M1115.6 264.1V354.6M1120.6 237.2V353.8M1125.1 237.2V351.3M1129.7 277.4V348.8M1134.4 278.4V350.8M1139.5 301.8V350.8M1144.5 300.0V348.3M1148.5 298.0V346.9M1153.5 295.5V345.3M1158.6 289.2V342.7M1164.1 277.9V348.3M1169.1 240.2V348.8M1172.9 270.4V353.8M1177.9 282.9V349.5M1182.4 286.7V350.8M1187.5 289.2V349.5M1191.7 289.2V350.3M1196.3 286.0V352.8M1206.3 259.1V351.3M1210.6 258.3V351.3M1215.6 256.5V352.8M1220.1 255.3V348.8M1225.2 277.9V348.3M1229.9 275.9V348.3M1234.5 275.9V342.7M1239.5 274.9V345.3M1244.0 267.4V347.0M1248.3 263.3V348.8M1253.3 243.2V355.3M1258.3 207.5V355.3M1263.4 207.5V353.8M1268.4 207.5V348.3M1272.7 217.1V347.0" stroke="#ff0000" stroke-width="1.25" fill="none"/><line x1="1169.1" y1="240" x2="1169.1" y2="349" stroke="#ff0000" stroke-width="2.6"/><line x1="991.6" y1="207.5" x2="991.6" y2="340" stroke="#ff0000" stroke-width="1.4"/><line x1="990.6" y1="274" x2="990.6" y2="340" stroke="#ff0000" stroke-width="1.4"/><polyline points="939.6,353.3 948.4,350.8 958.4,345.8 963.4,342.0 968.5,340.3 972.2,342.8 977.3,342.0 982.3,339.5 987.3,330.7 991.6,331.5 996.6,323.2 1001.6,318.1 1006.2,316.1 1010.4,333.2 1015.5,333.2 1020.5,330.7 1025.5,333.2 1034.3,337.8 1039.4,330.7 1044.4,330.2 1049.4,335.7 1058.2,333.2 1063.2,328.2 1068.3,325.2 1077.6,326.4 1091.6,326.2 1096.7,323.2 1101.7,314.4 1106.0,313.1 1100.0,315.1 1106.3,311.8 1110.6,315.1 1115.6,310.6 1120.6,308.6 1129.7,307.6 1134.4,311.8 1139.5,316.1 1144.5,311.8 1153.5,306.1 1158.6,305.6 1164.1,308.6 1169.1,312.6 1172.9,310.6 1182.4,310.6 1191.7,313.1 1196.3,311.8 1201.3,313.6 1206.3,312.6 1210.6,311.8 1215.6,315.1 1220.1,313.1 1225.2,316.9 1234.5,314.4 1244.0,312.6 1253.3,310.1 1263.4,309.3 1272.7,303.0 1277.7,296.8" fill="none" stroke="#d8d800" stroke-width="1.3"/><polyline points="939.6,353.3 944.3,353.3 948.4,350.3 958.4,347.8 963.4,352.8 972.2,350.8 982.3,350.3 987.3,338.3 991.6,337.0 991.6,340.8 996.6,336.5 1001.6,335.2 1006.2,337.0 1010.4,333.7 1020.5,329.5 1025.5,325.7 1029.3,335.7 1034.3,343.8 1039.4,328.7 1044.4,325.2 1053.2,340.8 1058.2,335.7 1068.3,330.2 1077.6,332.0 1082.6,331.2 1091.6,334.5 1101.7,335.7 1100.0,337.0 1106.3,334.5 1110.6,323.6 1115.6,323.1 1120.6,308.6 1125.1,309.3 1134.4,306.8 1144.5,305.6 1153.5,300.5 1158.6,293.0 1164.1,277.9 1169.1,266.6 1169.1,324.4 1172.9,270.9 1182.4,296.0 1191.7,294.2 1201.3,292.5 1206.3,293.0 1215.6,294.2 1225.2,286.7 1234.5,302.5 1244.0,311.1 1253.3,310.6 1263.4,309.3 1268.4,309.3 1277.7,298.0" fill="none" stroke="#e020e0" stroke-width="1.4"/><polyline points="939.6,379.7 948.4,373.5 953.4,377.2 958.4,367.9 963.4,373.5 972.2,368.4 982.3,367.2 987.3,366.4 991.6,362.9 996.6,365.4 1001.6,359.6 1010.4,361.4 1015.5,370.4 1025.5,362.1 1034.3,367.2 1039.4,367.9 1049.4,363.4 1058.2,357.1 1063.2,351.3 1072.5,352.1 1082.6,357.1 1091.6,352.1 1101.7,353.3 1100.0,352.8 1106.3,348.3 1110.6,350.3 1120.6,348.3 1129.7,342.7 1134.4,345.8 1144.5,344.5 1153.5,341.2 1158.6,342.7 1164.1,345.3 1169.1,346.3 1172.9,345.8 1182.4,343.8 1191.7,345.3 1201.3,345.8 1206.3,342.0 1215.6,338.2 1225.2,337.7 1234.5,336.2 1244.0,338.2 1248.3,345.8 1253.3,338.2 1263.4,333.2 1268.4,337.0 1272.7,345.3 1277.7,335.7" fill="none" stroke="#10d010" stroke-width="1.3"/><polyline points="939.6,381.0 948.4,374.7 958.4,369.7 963.4,373.5 972.2,369.7 982.3,364.7 987.3,363.4 991.6,354.6 996.6,364.7 1006.2,369.7 1015.5,378.5 1025.5,360.9 1029.3,358.9 1034.3,365.9 1039.4,362.9 1049.4,364.7 1058.2,357.1 1068.3,353.8 1077.6,354.6 1082.6,358.4 1091.6,353.8 1101.7,352.8 1100.0,353.8 1106.3,350.3 1110.6,345.3 1115.6,343.8 1120.6,343.3 1125.1,347.8 1129.7,338.7 1134.4,344.5 1139.5,345.3 1144.5,343.3 1153.5,337.7 1158.6,337.0 1164.1,343.8 1169.1,343.3 1172.9,347.8 1177.9,348.8 1182.4,343.8 1191.7,345.3 1201.3,349.5 1206.3,347.8 1215.6,347.8 1225.2,338.7 1234.5,339.5 1239.5,341.2 1244.0,338.2 1253.3,339.5 1263.4,339.5 1268.4,337.7 1272.7,328.7 1277.7,337.0" fill="none" stroke="#1010e0" stroke-width="1.4"/><polyline points="939.6,385.5 948.4,380.5 953.4,383.5 958.4,373.5 963.4,376.0 972.2,377.2 977.3,374.7 987.3,368.4 991.6,371.7 996.6,373.0 1001.6,371.7 1006.2,383.5 1010.4,373.5 1015.5,383.0 1020.5,376.0 1025.5,371.7 1029.3,373.0 1034.3,371.7 1039.4,374.2 1044.4,368.4 1049.4,369.7 1058.2,360.9 1063.2,358.4 1072.5,359.6 1080.8,360.4 1087.6,357.9 1106.0,357.9 1106.3,357.8 1110.6,355.3 1120.6,353.8 1129.7,348.8 1134.4,350.8 1139.5,350.8 1144.5,348.3 1153.5,345.3 1158.6,342.7 1164.1,348.3 1169.1,348.8 1172.9,353.8 1177.9,349.5 1182.4,350.8 1187.5,349.5 1191.7,350.3 1196.3,352.8 1201.3,353.3 1206.3,351.3 1210.6,351.3 1215.6,352.8 1220.1,348.8 1225.2,348.3 1229.9,348.3 1234.5,342.7 1239.5,345.3 1244.0,347.0 1248.3,348.8 1253.3,355.3 1258.3,355.3 1263.4,353.8 1268.4,348.3 1272.7,347.0 1277.7,343.3" fill="none" stroke="#7d5e12" stroke-width="2.7"/><line x1="1277.7" y1="211" x2="1277.7" y2="345" stroke="#000" stroke-width="2.6"/><line x1="1201.5" y1="215" x2="1201.5" y2="383" stroke="#000" stroke-width="1.4"/><path d="M1201.5 211.5L1208.5 216.5L1201.5 221.5z" fill="#000"/><path d="M1201.5 376L1208.5 381L1201.5 386z" fill="#000"/><line x1="932" y1="390.2" x2="932" y2="205" stroke="#000" stroke-width="1.4"/><path d="M928 211L932 205L936 211" fill="none" stroke="#000" stroke-width="1.2"/><line x1="932" y1="390.2" x2="1290" y2="390.2" stroke="#000" stroke-width="1.4"/><path d="M1283 386.2L1290 390.2L1283 394.2" fill="none" stroke="#000" stroke-width="1.2"/><line x1="925" y1="384.4" x2="932" y2="384.4" stroke="#000" stroke-width="1.4"/><line x1="925" y1="376.6" x2="932" y2="376.6" stroke="#000" stroke-width="1.4"/><line x1="925" y1="368.8" x2="932" y2="368.8" stroke="#000" stroke-width="1.4"/><line x1="925" y1="361.0" x2="932" y2="361.0" stroke="#000" stroke-width="1.4"/><line x1="925" y1="353.2" x2="932" y2="353.2" stroke="#000" stroke-width="1.4"/><line x1="925" y1="345.4" x2="932" y2="345.4" stroke="#000" stroke-width="1.4"/><line x1="925" y1="337.6" x2="932" y2="337.6" stroke="#000" stroke-width="1.4"/><line x1="925" y1="329.8" x2="932" y2="329.8" stroke="#000" stroke-width="1.4"/><line x1="925" y1="322.0" x2="932" y2="322.0" stroke="#000" stroke-width="1.4"/><line x1="925" y1="314.2" x2="932" y2="314.2" stroke="#000" stroke-width="1.4"/><line x1="925" y1="306.4" x2="932" y2="306.4" stroke="#000" stroke-width="1.4"/><line x1="925" y1="298.6" x2="932" y2="298.6" stroke="#000" stroke-width="1.4"/><line x1="925" y1="290.8" x2="932" y2="290.8" stroke="#000" stroke-width="1.4"/><line x1="925" y1="283.0" x2="932" y2="283.0" stroke="#000" stroke-width="1.4"/><line x1="925" y1="275.2" x2="932" y2="275.2" stroke="#000" stroke-width="1.4"/><line x1="925" y1="267.4" x2="932" y2="267.4" stroke="#000" stroke-width="1.4"/><line x1="925" y1="259.6" x2="932" y2="259.6" stroke="#000" stroke-width="1.4"/><line x1="925" y1="251.8" x2="932" y2="251.8" stroke="#000" stroke-width="1.4"/><line x1="925" y1="244.0" x2="932" y2="244.0" stroke="#000" stroke-width="1.4"/><line x1="925" y1="236.2" x2="932" y2="236.2" stroke="#000" stroke-width="1.4"/><line x1="925" y1="228.4" x2="932" y2="228.4" stroke="#000" stroke-width="1.4"/><line x1="925" y1="220.6" x2="932" y2="220.6" stroke="#000" stroke-width="1.4"/><line x1="925" y1="212.8" x2="932" y2="212.8" stroke="#000" stroke-width="1.4"/><line x1="963.3" y1="390.2" x2="963.3" y2="396.2" stroke="#000" stroke-width="1.4"/><line x1="1010.8" y1="390.2" x2="1010.8" y2="396.2" stroke="#000" stroke-width="1.4"/><line x1="1058.3" y1="390.2" x2="1058.3" y2="396.2" stroke="#000" stroke-width="1.4"/><line x1="1105.8" y1="390.2" x2="1105.8" y2="396.2" stroke="#000" stroke-width="1.4"/><line x1="1153.3" y1="390.2" x2="1153.3" y2="396.2" stroke="#000" stroke-width="1.4"/><line x1="1200.8" y1="390.2" x2="1200.8" y2="396.2" stroke="#000" stroke-width="1.4"/><line x1="1248.3" y1="390.2" x2="1248.3" y2="396.2" stroke="#000" stroke-width="1.4"/></svg>
<div id="t107" class="t" style="left:1207.00px;top:206.00px;font-family:'Liberation Sans',sans-serif;font-size:12.7px;color:#111;transform:scaleX(1.0500);transform-origin:0 0;clip-path:inset(3px 0 0 0)">Pompe</div>
<div id="t108" class="t" style="left:1207.00px;top:368.00px;font-family:'Liberation Sans',sans-serif;font-size:12.7px;color:#111;transform:scaleX(1.1026);transform-origin:0 0;">6000.0</div>
<div id="t109" class="t" style="right:427.50px;top:364.00px;font-family:'Liberation Sans',sans-serif;font-size:12.7px;color:#111;transform:scaleX(1.0714);transform-origin:100% 0;">131</div>
<div id="t110" class="t" style="right:427.50px;top:349.00px;font-family:'Liberation Sans',sans-serif;font-size:12.7px;color:#111;transform:scaleX(1.0714);transform-origin:100% 0;">133</div>
<div id="t111" class="t" style="right:427.50px;top:333.00px;font-family:'Liberation Sans',sans-serif;font-size:12.7px;color:#111;transform:scaleX(1.0714);transform-origin:100% 0;">135</div>
<div id="t112" class="t" style="right:427.50px;top:317.00px;font-family:'Liberation Sans',sans-serif;font-size:12.7px;color:#111;transform:scaleX(1.0714);transform-origin:100% 0;">137</div>
<div id="t113" class="t" style="right:427.50px;top:302.00px;font-family:'Liberation Sans',sans-serif;font-size:12.7px;color:#111;transform:scaleX(1.0714);transform-origin:100% 0;">139</div>
<div id="t114" class="t" style="right:427.50px;top:286.00px;font-family:'Liberation Sans',sans-serif;font-size:12.7px;color:#111;transform:scaleX(1.0714);transform-origin:100% 0;">141</div>
<div id="t115" class="t" style="right:427.50px;top:270.00px;font-family:'Liberation Sans',sans-serif;font-size:12.7px;color:#111;transform:scaleX(1.0714);transform-origin:100% 0;">143</div>
<div id="t116" class="t" style="right:427.50px;top:254.00px;font-family:'Liberation Sans',sans-serif;font-size:12.7px;color:#111;transform:scaleX(1.0714);transform-origin:100% 0;">145</div>
<div id="t117" class="t" style="right:427.50px;top:239.00px;font-family:'Liberation Sans',sans-serif;font-size:12.7px;color:#111;transform:scaleX(1.0714);transform-origin:100% 0;">147</div>
<div id="t118" class="t" style="right:427.50px;top:223.00px;font-family:'Liberation Sans',sans-serif;font-size:12.7px;color:#111;transform:scaleX(1.0714);transform-origin:100% 0;">149</div>
<div id="t119" class="t" style="right:427.50px;top:207.00px;font-family:'Liberation Sans',sans-serif;font-size:12.7px;color:#111;transform:scaleX(1.0714);transform-origin:100% 0;">151</div>
<div id="t120" class="t" style="right:427.50px;top:386.00px;font-family:'Liberation Sans',sans-serif;font-size:12.7px;color:#111;transform:scaleX(1.0714);transform-origin:100% 0;">128</div>
<div id="t121" class="t" style="left:919.00px;top:394.00px;font-family:'Liberation Sans',sans-serif;font-size:12.7px;color:#111;transform:scaleX(1.1000);transform-origin:0 0;">323</div>
<div id="t122" class="t" style="left:994.76px;top:394.00px;font-family:'Liberation Sans',sans-serif;font-size:12.7px;color:#111;transform:scaleX(1.1000);transform-origin:50% 0;">2 000</div>
<div id="t123" class="t" style="left:1042.28px;top:394.00px;font-family:'Liberation Sans',sans-serif;font-size:12.7px;color:#111;transform:scaleX(1.1000);transform-origin:50% 0;">3 000</div>
<div id="t124" class="t" style="left:1089.79px;top:394.00px;font-family:'Liberation Sans',sans-serif;font-size:12.7px;color:#111;transform:scaleX(1.1000);transform-origin:50% 0;">4 000</div>
<div id="t125" class="t" style="left:1137.30px;top:394.00px;font-family:'Liberation Sans',sans-serif;font-size:12.7px;color:#111;transform:scaleX(1.1000);transform-origin:50% 0;">5 000</div>
<div id="t126" class="t" style="left:1184.81px;top:394.00px;font-family:'Liberation Sans',sans-serif;font-size:12.7px;color:#111;transform:scaleX(1.1000);transform-origin:50% 0;">6 000</div>
<div id="t127" class="t" style="left:1232.32px;top:394.00px;font-family:'Liberation Sans',sans-serif;font-size:12.7px;color:#111;transform:scaleX(1.1000);transform-origin:50% 0;">7 000</div>
<div id="t128" class="t" style="left:1080.00px;top:410.00px;font-family:'Liberation Sans',sans-serif;font-size:12.7px;color:#333;transform:scaleX(1.0541);transform-origin:0 0;">Pk (m)</div>
<div class="a" style="left:1301px;top:184px;width:30px;height:238px;background:#eeeeee"></div>
<svg style="left:1305px;top:187px" width="25" height="25" viewBox="0 0 25 25"><defs><radialGradient id="mg" cx="0.4" cy="0.35" r="0.75"><stop offset="0" stop-color="#f4fcff"/><stop offset="0.6" stop-color="#a8dcf4"/><stop offset="1" stop-color="#5aa8d8"/></radialGradient></defs><path d="M15.5 15.5l5.5 5.5" stroke="#3a1a0a" stroke-width="6.2" stroke-linecap="round"/><path d="M15.8 15.8l5 5" stroke="#e0501a" stroke-width="4.2" stroke-linecap="round"/><path d="M16.5 16l3 3" stroke="#ff9060" stroke-width="1.2" stroke-linecap="round"/><circle cx="9.5" cy="9.5" r="8.2" fill="#888" stroke="#222" stroke-width="1.3"/><circle cx="9.5" cy="9.5" r="6.6" fill="url(#mg)" stroke="#ddd" stroke-width="0.9"/><path d="M5.5 9.5h8M9.5 5.5v8" stroke="#7a4a00" stroke-width="3.6" stroke-linecap="round"/><path d="M5.5 9.5h8M9.5 5.5v8" stroke="#ffd21a" stroke-width="2" stroke-linecap="round"/></svg>
<svg style="left:1305px;top:217px" width="25" height="25" viewBox="0 0 25 25"><defs><radialGradient id="mg" cx="0.4" cy="0.35" r="0.75"><stop offset="0" stop-color="#f4fcff"/><stop offset="0.6" stop-color="#a8dcf4"/><stop offset="1" stop-color="#5aa8d8"/></radialGradient></defs><path d="M15.5 15.5l5.5 5.5" stroke="#3a1a0a" stroke-width="6.2" stroke-linecap="round"/><path d="M15.8 15.8l5 5" stroke="#e0501a" stroke-width="4.2" stroke-linecap="round"/><path d="M16.5 16l3 3" stroke="#ff9060" stroke-width="1.2" stroke-linecap="round"/><circle cx="9.5" cy="9.5" r="8.2" fill="#888" stroke="#222" stroke-width="1.3"/><circle cx="9.5" cy="9.5" r="6.6" fill="url(#mg)" stroke="#ddd" stroke-width="0.9"/><path d="M5.5 9.5h8" stroke="#7a4a00" stroke-width="3.6" stroke-linecap="round"/><path d="M5.5 9.5h8" stroke="#ffd21a" stroke-width="2" stroke-linecap="round"/></svg>
<svg style="left:1305px;top:247px" width="25" height="25" viewBox="0 0 25 25"><defs><radialGradient id="mg" cx="0.4" cy="0.35" r="0.75"><stop offset="0" stop-color="#f4fcff"/><stop offset="0.6" stop-color="#a8dcf4"/><stop offset="1" stop-color="#5aa8d8"/></radialGradient></defs><path d="M15.5 15.5l5.5 5.5" stroke="#3a1a0a" stroke-width="6.2" stroke-linecap="round"/><path d="M15.8 15.8l5 5" stroke="#e0501a" stroke-width="4.2" stroke-linecap="round"/><path d="M16.5 16l3 3" stroke="#ff9060" stroke-width="1.2" stroke-linecap="round"/><circle cx="9.5" cy="9.5" r="8.2" fill="#888" stroke="#222" stroke-width="1.3"/><circle cx="9.5" cy="9.5" r="6.6" fill="url(#mg)" stroke="#ddd" stroke-width="0.9"/><path d="M6.5 8.3V6.5H8.3M10.7 6.5h1.8V8.3M12.5 10.7v1.8h-1.8M8.3 12.5H6.5v-1.8" fill="none" stroke="#0a3a80" stroke-width="1.4"/></svg>
<svg style="left:1305px;top:277px" width="25" height="25" viewBox="0 0 25 25"><defs><radialGradient id="mg" cx="0.4" cy="0.35" r="0.75"><stop offset="0" stop-color="#f4fcff"/><stop offset="0.6" stop-color="#a8dcf4"/><stop offset="1" stop-color="#5aa8d8"/></radialGradient></defs><path d="M15.5 15.5l5.5 5.5" stroke="#3a1a0a" stroke-width="6.2" stroke-linecap="round"/><path d="M15.8 15.8l5 5" stroke="#e0501a" stroke-width="4.2" stroke-linecap="round"/><path d="M16.5 16l3 3" stroke="#ff9060" stroke-width="1.2" stroke-linecap="round"/><circle cx="9.5" cy="9.5" r="8.2" fill="#888" stroke="#222" stroke-width="1.3"/><circle cx="9.5" cy="9.5" r="6.6" fill="url(#mg)" stroke="#ddd" stroke-width="0.9"/><text x="9.6" y="12.2" font-family="Liberation Sans" font-size="7" font-weight="bold" text-anchor="middle" fill="#0a3a80">1:1</text></svg>
<svg style="left:1306px;top:308px" width="24" height="21" viewBox="0 0 24 21"><defs><linearGradient id="prg" x1="0" y1="0" x2="0" y2="1"><stop offset="0" stop-color="#ffffff"/><stop offset="1" stop-color="#9aa4ac"/></linearGradient></defs><rect x="6.5" y="0.5" width="11" height="7" fill="#fff" stroke="#333"/><path d="M8 3h8M8 5h6" stroke="#999" stroke-width="0.7"/><path d="M1 10c0-2 1.5-3.5 3.5-3.5h15c2 0 3.5 1.5 3.5 3.5v7c0 2-1 3.5-3 3.5H4c-2 0-3-1.5-3-3.5z" fill="url(#prg)" stroke="#333" stroke-width="1"/><path d="M4 8.5h16l-2 4H6z" fill="#2a8ae0"/><rect x="3" y="14.5" width="2" height="1.5" fill="#20a020"/><rect x="5.5" y="14.5" width="2" height="1.5" fill="#e02020"/></svg>
<div class="a" style="left:706px;top:430px;width:595px;height:290px;background:#ffffff"></div>
<div id="t129" class="t" style="left:706.00px;top:432.00px;font-family:'Liberation Sans',sans-serif;font-size:12.7px;color:#333;transform:scaleX(1.0612);transform-origin:0 0;">Cote (m)</div>
<svg style="left:0;top:0" width="1353" height="776"><line x1="735.8" y1="685.5" x2="1289.5" y2="685.5" stroke="#dcdcdc" stroke-width="1"/><line x1="735.8" y1="678.5" x2="1289.5" y2="678.5" stroke="#c4c4c4" stroke-width="1"/><line x1="735.8" y1="672.5" x2="1289.5" y2="672.5" stroke="#dcdcdc" stroke-width="1"/><line x1="735.8" y1="665.5" x2="1289.5" y2="665.5" stroke="#c4c4c4" stroke-width="1"/><line x1="735.8" y1="659.5" x2="1289.5" y2="659.5" stroke="#dcdcdc" stroke-width="1"/><line x1="735.8" y1="652.5" x2="1289.5" y2="652.5" stroke="#c4c4c4" stroke-width="1"/><line x1="735.8" y1="645.5" x2="1289.5" y2="645.5" stroke="#dcdcdc" stroke-width="1"/><line x1="735.8" y1="639.5" x2="1289.5" y2="639.5" stroke="#c4c4c4" stroke-width="1"/><line x1="735.8" y1="632.5" x2="1289.5" y2="632.5" stroke="#dcdcdc" stroke-width="1"/><line x1="735.8" y1="626.5" x2="1289.5" y2="626.5" stroke="#c4c4c4" stroke-width="1"/><line x1="735.8" y1="619.5" x2="1289.5" y2="619.5" stroke="#dcdcdc" stroke-width="1"/><line x1="735.8" y1="613.5" x2="1289.5" y2="613.5" stroke="#c4c4c4" stroke-width="1"/><line x1="735.8" y1="606.5" x2="1289.5" y2="606.5" stroke="#dcdcdc" stroke-width="1"/><line x1="735.8" y1="600.5" x2="1289.5" y2="600.5" stroke="#c4c4c4" stroke-width="1"/><line x1="735.8" y1="593.5" x2="1289.5" y2="593.5" stroke="#dcdcdc" stroke-width="1"/><line x1="735.8" y1="587.5" x2="1289.5" y2="587.5" stroke="#c4c4c4" stroke-width="1"/><line x1="735.8" y1="580.5" x2="1289.5" y2="580.5" stroke="#dcdcdc" stroke-width="1"/><line x1="735.8" y1="573.5" x2="1289.5" y2="573.5" stroke="#c4c4c4" stroke-width="1"/><line x1="735.8" y1="567.5" x2="1289.5" y2="567.5" stroke="#dcdcdc" stroke-width="1"/><line x1="735.8" y1="560.5" x2="1289.5" y2="560.5" stroke="#c4c4c4" stroke-width="1"/><line x1="735.8" y1="554.5" x2="1289.5" y2="554.5" stroke="#dcdcdc" stroke-width="1"/><line x1="735.8" y1="547.5" x2="1289.5" y2="547.5" stroke="#c4c4c4" stroke-width="1"/><line x1="735.8" y1="541.5" x2="1289.5" y2="541.5" stroke="#dcdcdc" stroke-width="1"/><line x1="735.8" y1="534.5" x2="1289.5" y2="534.5" stroke="#c4c4c4" stroke-width="1"/><line x1="735.8" y1="528.5" x2="1289.5" y2="528.5" stroke="#dcdcdc" stroke-width="1"/><line x1="735.8" y1="521.5" x2="1289.5" y2="521.5" stroke="#c4c4c4" stroke-width="1"/><line x1="735.8" y1="515.5" x2="1289.5" y2="515.5" stroke="#dcdcdc" stroke-width="1"/><line x1="735.8" y1="508.5" x2="1289.5" y2="508.5" stroke="#c4c4c4" stroke-width="1"/><line x1="735.8" y1="502.5" x2="1289.5" y2="502.5" stroke="#dcdcdc" stroke-width="1"/><line x1="735.8" y1="495.5" x2="1289.5" y2="495.5" stroke="#c4c4c4" stroke-width="1"/><line x1="735.8" y1="488.5" x2="1289.5" y2="488.5" stroke="#dcdcdc" stroke-width="1"/><line x1="735.8" y1="482.5" x2="1289.5" y2="482.5" stroke="#c4c4c4" stroke-width="1"/><line x1="735.8" y1="475.5" x2="1289.5" y2="475.5" stroke="#dcdcdc" stroke-width="1"/><line x1="735.8" y1="469.5" x2="1289.5" y2="469.5" stroke="#c4c4c4" stroke-width="1"/><line x1="735.8" y1="462.5" x2="1289.5" y2="462.5" stroke="#dcdcdc" stroke-width="1"/><line x1="735.8" y1="456.5" x2="1289.5" y2="456.5" stroke="#c4c4c4" stroke-width="1"/><line x1="737.5" y1="454" x2="737.5" y2="686.4" stroke="#c4c4c4" stroke-width="1"/><line x1="746.5" y1="454" x2="746.5" y2="686.4" stroke="#dcdcdc" stroke-width="1"/><line x1="756.5" y1="454" x2="756.5" y2="686.4" stroke="#c4c4c4" stroke-width="1"/><line x1="765.5" y1="454" x2="765.5" y2="686.4" stroke="#dcdcdc" stroke-width="1"/><line x1="775.5" y1="454" x2="775.5" y2="686.4" stroke="#c4c4c4" stroke-width="1"/><line x1="784.5" y1="454" x2="784.5" y2="686.4" stroke="#dcdcdc" stroke-width="1"/><line x1="794.5" y1="454" x2="794.5" y2="686.4" stroke="#c4c4c4" stroke-width="1"/><line x1="803.5" y1="454" x2="803.5" y2="686.4" stroke="#dcdcdc" stroke-width="1"/><line x1="813.5" y1="454" x2="813.5" y2="686.4" stroke="#c4c4c4" stroke-width="1"/><line x1="822.5" y1="454" x2="822.5" y2="686.4" stroke="#dcdcdc" stroke-width="1"/><line x1="832.5" y1="454" x2="832.5" y2="686.4" stroke="#c4c4c4" stroke-width="1"/><line x1="841.5" y1="454" x2="841.5" y2="686.4" stroke="#dcdcdc" stroke-width="1"/><line x1="851.5" y1="454" x2="851.5" y2="686.4" stroke="#c4c4c4" stroke-width="1"/><line x1="861.5" y1="454" x2="861.5" y2="686.4" stroke="#dcdcdc" stroke-width="1"/><line x1="870.5" y1="454" x2="870.5" y2="686.4" stroke="#c4c4c4" stroke-width="1"/><line x1="880.5" y1="454" x2="880.5" y2="686.4" stroke="#dcdcdc" stroke-width="1"/><line x1="889.5" y1="454" x2="889.5" y2="686.4" stroke="#c4c4c4" stroke-width="1"/><line x1="899.5" y1="454" x2="899.5" y2="686.4" stroke="#dcdcdc" stroke-width="1"/><line x1="908.5" y1="454" x2="908.5" y2="686.4" stroke="#c4c4c4" stroke-width="1"/><line x1="918.5" y1="454" x2="918.5" y2="686.4" stroke="#dcdcdc" stroke-width="1"/><line x1="927.5" y1="454" x2="927.5" y2="686.4" stroke="#c4c4c4" stroke-width="1"/><line x1="937.5" y1="454" x2="937.5" y2="686.4" stroke="#dcdcdc" stroke-width="1"/><line x1="946.5" y1="454" x2="946.5" y2="686.4" stroke="#c4c4c4" stroke-width="1"/><line x1="956.5" y1="454" x2="956.5" y2="686.4" stroke="#dcdcdc" stroke-width="1"/><line x1="965.5" y1="454" x2="965.5" y2="686.4" stroke="#c4c4c4" stroke-width="1"/><line x1="975.5" y1="454" x2="975.5" y2="686.4" stroke="#dcdcdc" stroke-width="1"/><line x1="985.5" y1="454" x2="985.5" y2="686.4" stroke="#c4c4c4" stroke-width="1"/><line x1="994.5" y1="454" x2="994.5" y2="686.4" stroke="#dcdcdc" stroke-width="1"/><line x1="1004.5" y1="454" x2="1004.5" y2="686.4" stroke="#c4c4c4" stroke-width="1"/><line x1="1013.5" y1="454" x2="1013.5" y2="686.4" stroke="#dcdcdc" stroke-width="1"/><line x1="1023.5" y1="454" x2="1023.5" y2="686.4" stroke="#c4c4c4" stroke-width="1"/><line x1="1032.5" y1="454" x2="1032.5" y2="686.4" stroke="#dcdcdc" stroke-width="1"/><line x1="1042.5" y1="454" x2="1042.5" y2="686.4" stroke="#c4c4c4" stroke-width="1"/><line x1="1051.5" y1="454" x2="1051.5" y2="686.4" stroke="#dcdcdc" stroke-width="1"/><line x1="1061.5" y1="454" x2="1061.5" y2="686.4" stroke="#c4c4c4" stroke-width="1"/><line x1="1070.5" y1="454" x2="1070.5" y2="686.4" stroke="#dcdcdc" stroke-width="1"/><line x1="1080.5" y1="454" x2="1080.5" y2="686.4" stroke="#c4c4c4" stroke-width="1"/><line x1="1090.5" y1="454" x2="1090.5" y2="686.4" stroke="#dcdcdc" stroke-width="1"/><line x1="1099.5" y1="454" x2="1099.5" y2="686.4" stroke="#c4c4c4" stroke-width="1"/><line x1="1109.5" y1="454" x2="1109.5" y2="686.4" stroke="#dcdcdc" stroke-width="1"/><line x1="1118.5" y1="454" x2="1118.5" y2="686.4" stroke="#c4c4c4" stroke-width="1"/><line x1="1128.5" y1="454" x2="1128.5" y2="686.4" stroke="#dcdcdc" stroke-width="1"/><line x1="1137.5" y1="454" x2="1137.5" y2="686.4" stroke="#c4c4c4" stroke-width="1"/><line x1="1147.5" y1="454" x2="1147.5" y2="686.4" stroke="#dcdcdc" stroke-width="1"/><line x1="1156.5" y1="454" x2="1156.5" y2="686.4" stroke="#c4c4c4" stroke-width="1"/><line x1="1166.5" y1="454" x2="1166.5" y2="686.4" stroke="#dcdcdc" stroke-width="1"/><line x1="1175.5" y1="454" x2="1175.5" y2="686.4" stroke="#c4c4c4" stroke-width="1"/><line x1="1185.5" y1="454" x2="1185.5" y2="686.4" stroke="#dcdcdc" stroke-width="1"/><line x1="1194.5" y1="454" x2="1194.5" y2="686.4" stroke="#c4c4c4" stroke-width="1"/><line x1="1204.5" y1="454" x2="1204.5" y2="686.4" stroke="#dcdcdc" stroke-width="1"/><line x1="1214.5" y1="454" x2="1214.5" y2="686.4" stroke="#c4c4c4" stroke-width="1"/><line x1="1223.5" y1="454" x2="1223.5" y2="686.4" stroke="#dcdcdc" stroke-width="1"/><line x1="1233.5" y1="454" x2="1233.5" y2="686.4" stroke="#c4c4c4" stroke-width="1"/><line x1="1242.5" y1="454" x2="1242.5" y2="686.4" stroke="#dcdcdc" stroke-width="1"/><line x1="1252.5" y1="454" x2="1252.5" y2="686.4" stroke="#c4c4c4" stroke-width="1"/><line x1="1261.5" y1="454" x2="1261.5" y2="686.4" stroke="#dcdcdc" stroke-width="1"/><line x1="1271.5" y1="454" x2="1271.5" y2="686.4" stroke="#c4c4c4" stroke-width="1"/><line x1="1280.5" y1="454" x2="1280.5" y2="686.4" stroke="#dcdcdc" stroke-width="1"/><line x1="1290.5" y1="454" x2="1290.5" y2="686.4" stroke="#c4c4c4" stroke-width="1"/><line x1="735.8" y1="454.5" x2="1289.5" y2="454.5" stroke="#c4c4c4"/><polyline points="744.3,464.8 810.8,501.0 822.0,533.5 836.5,585.5 836.5,597.7 851.4,605.0 876.3,660.0 883.0,678.2 889.9,678.2 898.9,683.6 905.7,681.8 921.5,672.7 928.3,674.5 944.1,669.1 962.2,669.1 989.3,656.9 1014.2,650.1 1026.8,611.4 1035.8,608.3 1049.4,591.5 1072.0,565.3 1099.2,565.3 1287.0,565.3" fill="none" stroke="#d0d020" stroke-width="2.2"/><polyline points="738.4,454.4 810.8,483.8 827.5,573.3 842.4,581.0 853.7,603.6 876.3,662.3 886.3,673.6 896.7,662.3 914.7,656.5 926.0,656.5 944.1,659.2 964.5,665.5 993.9,661.0 1012.8,664.6 1020.0,655.8 1047.0,596.0 1054.0,596.0 1099.2,564.4 1271.1,563.5" fill="none" stroke="#000" stroke-width="2.6" stroke-linejoin="round"/><line x1="735.8" y1="686.4" x2="735.8" y2="451" stroke="#000" stroke-width="1.4"/><path d="M731.8 457L735.8 451L739.8 457" fill="none" stroke="#000" stroke-width="1.2"/><line x1="735.8" y1="686.4" x2="1293" y2="686.4" stroke="#000" stroke-width="1.4"/><path d="M1286 682.4L1293 686.4L1286 690.4" fill="none" stroke="#000" stroke-width="1.2"/><line x1="728.8" y1="678.2" x2="735.8" y2="678.2" stroke="#000" stroke-width="1.4"/><line x1="728.8" y1="665.1" x2="735.8" y2="665.1" stroke="#000" stroke-width="1.4"/><line x1="728.8" y1="652.0" x2="735.8" y2="652.0" stroke="#000" stroke-width="1.4"/><line x1="728.8" y1="638.9" x2="735.8" y2="638.9" stroke="#000" stroke-width="1.4"/><line x1="728.8" y1="625.8" x2="735.8" y2="625.8" stroke="#000" stroke-width="1.4"/><line x1="728.8" y1="612.8" x2="735.8" y2="612.8" stroke="#000" stroke-width="1.4"/><line x1="728.8" y1="599.7" x2="735.8" y2="599.7" stroke="#000" stroke-width="1.4"/><line x1="728.8" y1="586.6" x2="735.8" y2="586.6" stroke="#000" stroke-width="1.4"/><line x1="728.8" y1="573.5" x2="735.8" y2="573.5" stroke="#000" stroke-width="1.4"/><line x1="728.8" y1="560.4" x2="735.8" y2="560.4" stroke="#000" stroke-width="1.4"/><line x1="728.8" y1="547.3" x2="735.8" y2="547.3" stroke="#000" stroke-width="1.4"/><line x1="728.8" y1="534.2" x2="735.8" y2="534.2" stroke="#000" stroke-width="1.4"/><line x1="728.8" y1="521.2" x2="735.8" y2="521.2" stroke="#000" stroke-width="1.4"/><line x1="728.8" y1="508.1" x2="735.8" y2="508.1" stroke="#000" stroke-width="1.4"/><line x1="728.8" y1="495.0" x2="735.8" y2="495.0" stroke="#000" stroke-width="1.4"/><line x1="728.8" y1="481.9" x2="735.8" y2="481.9" stroke="#000" stroke-width="1.4"/><line x1="728.8" y1="468.8" x2="735.8" y2="468.8" stroke="#000" stroke-width="1.4"/><line x1="728.8" y1="455.7" x2="735.8" y2="455.7" stroke="#000" stroke-width="1.4"/><line x1="736.5" y1="682.4" x2="736.5" y2="690.4" stroke="#000" stroke-width="1.4"/><line x1="755.6" y1="682.4" x2="755.6" y2="690.4" stroke="#000" stroke-width="1.4"/><line x1="774.7" y1="682.4" x2="774.7" y2="690.4" stroke="#000" stroke-width="1.4"/><line x1="793.8" y1="682.4" x2="793.8" y2="690.4" stroke="#000" stroke-width="1.4"/><line x1="812.8" y1="682.4" x2="812.8" y2="690.4" stroke="#000" stroke-width="1.4"/><line x1="831.9" y1="682.4" x2="831.9" y2="690.4" stroke="#000" stroke-width="1.4"/><line x1="851.0" y1="682.4" x2="851.0" y2="690.4" stroke="#000" stroke-width="1.4"/><line x1="870.1" y1="682.4" x2="870.1" y2="690.4" stroke="#000" stroke-width="1.4"/><line x1="889.2" y1="682.4" x2="889.2" y2="690.4" stroke="#000" stroke-width="1.4"/><line x1="908.2" y1="682.4" x2="908.2" y2="690.4" stroke="#000" stroke-width="1.4"/><line x1="927.3" y1="682.4" x2="927.3" y2="690.4" stroke="#000" stroke-width="1.4"/><line x1="946.4" y1="682.4" x2="946.4" y2="690.4" stroke="#000" stroke-width="1.4"/><line x1="965.5" y1="682.4" x2="965.5" y2="690.4" stroke="#000" stroke-width="1.4"/><line x1="984.6" y1="682.4" x2="984.6" y2="690.4" stroke="#000" stroke-width="1.4"/><line x1="1003.6" y1="682.4" x2="1003.6" y2="690.4" stroke="#000" stroke-width="1.4"/><line x1="1022.7" y1="682.4" x2="1022.7" y2="690.4" stroke="#000" stroke-width="1.4"/><line x1="1041.8" y1="682.4" x2="1041.8" y2="690.4" stroke="#000" stroke-width="1.4"/><line x1="1060.9" y1="682.4" x2="1060.9" y2="690.4" stroke="#000" stroke-width="1.4"/><line x1="1080.0" y1="682.4" x2="1080.0" y2="690.4" stroke="#000" stroke-width="1.4"/><line x1="1099.0" y1="682.4" x2="1099.0" y2="690.4" stroke="#000" stroke-width="1.4"/><line x1="1118.1" y1="682.4" x2="1118.1" y2="690.4" stroke="#000" stroke-width="1.4"/><line x1="1137.2" y1="682.4" x2="1137.2" y2="690.4" stroke="#000" stroke-width="1.4"/><line x1="1156.3" y1="682.4" x2="1156.3" y2="690.4" stroke="#000" stroke-width="1.4"/><line x1="1175.4" y1="682.4" x2="1175.4" y2="690.4" stroke="#000" stroke-width="1.4"/><line x1="1194.4" y1="682.4" x2="1194.4" y2="690.4" stroke="#000" stroke-width="1.4"/><line x1="1213.5" y1="682.4" x2="1213.5" y2="690.4" stroke="#000" stroke-width="1.4"/><line x1="1232.6" y1="682.4" x2="1232.6" y2="690.4" stroke="#000" stroke-width="1.4"/><line x1="1251.7" y1="682.4" x2="1251.7" y2="690.4" stroke="#000" stroke-width="1.4"/><line x1="1270.8" y1="682.4" x2="1270.8" y2="690.4" stroke="#000" stroke-width="1.4"/><line x1="1289.8" y1="682.4" x2="1289.8" y2="690.4" stroke="#000" stroke-width="1.4"/></svg>
<div id="t130" class="t" style="right:622.00px;top:660.00px;font-family:'Liberation Sans',sans-serif;font-size:12.7px;color:#111;transform:scaleX(1.1400);transform-origin:100% 0;">135</div>
<div id="t131" class="t" style="right:622.00px;top:633.00px;font-family:'Liberation Sans',sans-serif;font-size:12.7px;color:#111;transform:scaleX(1.1400);transform-origin:100% 0;">137</div>
<div id="t132" class="t" style="right:622.00px;top:607.00px;font-family:'Liberation Sans',sans-serif;font-size:12.7px;color:#111;transform:scaleX(1.1400);transform-origin:100% 0;">139</div>
<div id="t133" class="t" style="right:622.00px;top:581.00px;font-family:'Liberation Sans',sans-serif;font-size:12.7px;color:#111;transform:scaleX(1.1400);transform-origin:100% 0;">141</div>
<div id="t134" class="t" style="right:622.00px;top:555.00px;font-family:'Liberation Sans',sans-serif;font-size:12.7px;color:#111;transform:scaleX(1.1400);transform-origin:100% 0;">143</div>
<div id="t135" class="t" style="right:622.00px;top:529.00px;font-family:'Liberation Sans',sans-serif;font-size:12.7px;color:#111;transform:scaleX(1.1400);transform-origin:100% 0;">145</div>
<div id="t136" class="t" style="right:622.00px;top:503.00px;font-family:'Liberation Sans',sans-serif;font-size:12.7px;color:#111;transform:scaleX(1.1400);transform-origin:100% 0;">147</div>
<div id="t137" class="t" style="right:622.00px;top:476.00px;font-family:'Liberation Sans',sans-serif;font-size:12.7px;color:#111;transform:scaleX(1.1400);transform-origin:100% 0;">149</div>
<div id="t138" class="t" style="right:622.00px;top:450.00px;font-family:'Liberation Sans',sans-serif;font-size:12.7px;color:#111;transform:scaleX(1.1400);transform-origin:100% 0;">151</div>
<div id="t139" class="t" style="right:622.00px;top:681.00px;font-family:'Liberation Sans',sans-serif;font-size:12.7px;color:#111;transform:scaleX(1.1400);transform-origin:100% 0;">133</div>
<div id="t140" class="t" style="left:725.50px;top:690.00px;font-family:'Liberation Sans',sans-serif;font-size:12.7px;color:#111;transform:scaleX(1.1000);transform-origin:0 0;">-61</div>
<div id="t141" class="t" style="left:765.68px;top:690.00px;font-family:'Liberation Sans',sans-serif;font-size:12.7px;color:#111;transform:scaleX(1.1400);transform-origin:50% 0;">-40</div>
<div id="t142" class="t" style="left:803.84px;top:690.00px;font-family:'Liberation Sans',sans-serif;font-size:12.7px;color:#111;transform:scaleX(1.1400);transform-origin:50% 0;">-20</div>
<div id="t143" class="t" style="left:847.50px;top:690.00px;font-family:'Liberation Sans',sans-serif;font-size:12.7px;color:#111;transform:scaleX(1.1400);transform-origin:50% 0;">0</div>
<div id="t144" class="t" style="left:901.24px;top:690.00px;font-family:'Liberation Sans',sans-serif;font-size:12.7px;color:#111;transform:scaleX(1.1400);transform-origin:50% 0;">30</div>
<div id="t145" class="t" style="left:939.40px;top:690.00px;font-family:'Liberation Sans',sans-serif;font-size:12.7px;color:#111;transform:scaleX(1.1400);transform-origin:50% 0;">50</div>
<div id="t146" class="t" style="left:977.56px;top:690.00px;font-family:'Liberation Sans',sans-serif;font-size:12.7px;color:#111;transform:scaleX(1.1400);transform-origin:50% 0;">70</div>
<div id="t147" class="t" style="left:1015.72px;top:690.00px;font-family:'Liberation Sans',sans-serif;font-size:12.7px;color:#111;transform:scaleX(1.1400);transform-origin:50% 0;">90</div>
<div id="t148" class="t" style="left:1050.88px;top:690.00px;font-family:'Liberation Sans',sans-serif;font-size:12.7px;color:#111;transform:scaleX(1.1400);transform-origin:50% 0;">110</div>
<div id="t149" class="t" style="left:1088.54px;top:690.00px;font-family:'Liberation Sans',sans-serif;font-size:12.7px;color:#111;transform:scaleX(1.1400);transform-origin:50% 0;">130</div>
<div id="t150" class="t" style="left:1126.70px;top:690.00px;font-family:'Liberation Sans',sans-serif;font-size:12.7px;color:#111;transform:scaleX(1.1400);transform-origin:50% 0;">150</div>
<div id="t151" class="t" style="left:1164.86px;top:690.00px;font-family:'Liberation Sans',sans-serif;font-size:12.7px;color:#111;transform:scaleX(1.1400);transform-origin:50% 0;">170</div>
<div id="t152" class="t" style="left:1203.02px;top:690.00px;font-family:'Liberation Sans',sans-serif;font-size:12.7px;color:#111;transform:scaleX(1.1400);transform-origin:50% 0;">190</div>
<div id="t153" class="t" style="left:1241.18px;top:690.00px;font-family:'Liberation Sans',sans-serif;font-size:12.7px;color:#111;transform:scaleX(1.1400);transform-origin:50% 0;">210</div>
<div id="t154" class="t" style="left:1279.34px;top:690.00px;font-family:'Liberation Sans',sans-serif;font-size:12.7px;color:#111;transform:scaleX(1.1400);transform-origin:50% 0;">230</div>
<div id="t155" class="t" style="left:863.08px;top:690.00px;font-family:'Liberation Sans',sans-serif;font-size:12.7px;color:#111;transform:scaleX(1.1400);transform-origin:50% 0;">10</div>
<div id="t156" class="t" style="left:961.00px;top:707.00px;font-family:'Liberation Sans',sans-serif;font-size:12.7px;color:#333;transform:scaleX(1.0822);transform-origin:0 0;">Abscisse (m)</div>
<div id="t157" class="t" style="left:853.00px;top:588.00px;font-family:'Liberation Sans',sans-serif;font-size:12.5px;color:#c8c820;transform:scaleX(1.1818);transform-origin:0 0;">rg</div>
<div id="t158" class="t" style="left:877.50px;top:652.00px;font-family:'Liberation Sans',sans-serif;font-size:12px;color:#20c020;transform:scaleX(1.0000);transform-origin:0 0;">FG1</div>
<div id="t159" class="t" style="left:888.00px;top:662.00px;font-family:'Liberation Sans',sans-serif;font-size:12px;color:#20c0c0;transform:scaleX(1.0000);transform-origin:0 0;">AX1</div>
<div id="t160" class="t" style="left:1015.00px;top:652.00px;font-family:'Liberation Sans',sans-serif;font-size:12px;color:#2020d0;transform:scaleX(1.0000);transform-origin:0 0;">PD1</div>
<div id="t161" class="t" style="left:1048.50px;top:586.00px;font-family:'Liberation Sans',sans-serif;font-size:12px;color:#d020d0;transform:scaleX(1.1818);transform-origin:0 0;">rd</div>
<div class="a" style="left:1301px;top:430px;width:30px;height:289px;background:#eeeeee"></div>
<svg style="left:1305px;top:433px" width="25" height="25" viewBox="0 0 25 25"><defs><radialGradient id="mg" cx="0.4" cy="0.35" r="0.75"><stop offset="0" stop-color="#f4fcff"/><stop offset="0.6" stop-color="#a8dcf4"/><stop offset="1" stop-color="#5aa8d8"/></radialGradient></defs><path d="M15.5 15.5l5.5 5.5" stroke="#3a1a0a" stroke-width="6.2" stroke-linecap="round"/><path d="M15.8 15.8l5 5" stroke="#e0501a" stroke-width="4.2" stroke-linecap="round"/><path d="M16.5 16l3 3" stroke="#ff9060" stroke-width="1.2" stroke-linecap="round"/><circle cx="9.5" cy="9.5" r="8.2" fill="#888" stroke="#222" stroke-width="1.3"/><circle cx="9.5" cy="9.5" r="6.6" fill="url(#mg)" stroke="#ddd" stroke-width="0.9"/><path d="M5.5 9.5h8M9.5 5.5v8" stroke="#7a4a00" stroke-width="3.6" stroke-linecap="round"/><path d="M5.5 9.5h8M9.5 5.5v8" stroke="#ffd21a" stroke-width="2" stroke-linecap="round"/></svg>
<svg style="left:1305px;top:463px" width="25" height="25" viewBox="0 0 25 25"><defs><radialGradient id="mg" cx="0.4" cy="0.35" r="0.75"><stop offset="0" stop-color="#f4fcff"/><stop offset="0.6" stop-color="#a8dcf4"/><stop offset="1" stop-color="#5aa8d8"/></radialGradient></defs><path d="M15.5 15.5l5.5 5.5" stroke="#3a1a0a" stroke-width="6.2" stroke-linecap="round"/><path d="M15.8 15.8l5 5" stroke="#e0501a" stroke-width="4.2" stroke-linecap="round"/><path d="M16.5 16l3 3" stroke="#ff9060" stroke-width="1.2" stroke-linecap="round"/><circle cx="9.5" cy="9.5" r="8.2" fill="#888" stroke="#222" stroke-width="1.3"/><circle cx="9.5" cy="9.5" r="6.6" fill="url(#mg)" stroke="#ddd" stroke-width="0.9"/><path d="M5.5 9.5h8" stroke="#7a4a00" stroke-width="3.6" stroke-linecap="round"/><path d="M5.5 9.5h8" stroke="#ffd21a" stroke-width="2" stroke-linecap="round"/></svg>
<svg style="left:1305px;top:493px" width="25" height="25" viewBox="0 0 25 25"><defs><radialGradient id="mg" cx="0.4" cy="0.35" r="0.75"><stop offset="0" stop-color="#f4fcff"/><stop offset="0.6" stop-color="#a8dcf4"/><stop offset="1" stop-color="#5aa8d8"/></radialGradient></defs><path d="M15.5 15.5l5.5 5.5" stroke="#3a1a0a" stroke-width="6.2" stroke-linecap="round"/><path d="M15.8 15.8l5 5" stroke="#e0501a" stroke-width="4.2" stroke-linecap="round"/><path d="M16.5 16l3 3" stroke="#ff9060" stroke-width="1.2" stroke-linecap="round"/><circle cx="9.5" cy="9.5" r="8.2" fill="#888" stroke="#222" stroke-width="1.3"/><circle cx="9.5" cy="9.5" r="6.6" fill="url(#mg)" stroke="#ddd" stroke-width="0.9"/><path d="M6.5 8.3V6.5H8.3M10.7 6.5h1.8V8.3M12.5 10.7v1.8h-1.8M8.3 12.5H6.5v-1.8" fill="none" stroke="#0a3a80" stroke-width="1.4"/></svg>
<svg style="left:1305px;top:523px" width="25" height="25" viewBox="0 0 25 25"><defs><radialGradient id="mg" cx="0.4" cy="0.35" r="0.75"><stop offset="0" stop-color="#f4fcff"/><stop offset="0.6" stop-color="#a8dcf4"/><stop offset="1" stop-color="#5aa8d8"/></radialGradient></defs><path d="M15.5 15.5l5.5 5.5" stroke="#3a1a0a" stroke-width="6.2" stroke-linecap="round"/><path d="M15.8 15.8l5 5" stroke="#e0501a" stroke-width="4.2" stroke-linecap="round"/><path d="M16.5 16l3 3" stroke="#ff9060" stroke-width="1.2" stroke-linecap="round"/><circle cx="9.5" cy="9.5" r="8.2" fill="#888" stroke="#222" stroke-width="1.3"/><circle cx="9.5" cy="9.5" r="6.6" fill="url(#mg)" stroke="#ddd" stroke-width="0.9"/><text x="9.6" y="12.2" font-family="Liberation Sans" font-size="7" font-weight="bold" text-anchor="middle" fill="#0a3a80">1:1</text></svg>
<svg style="left:1306px;top:554px" width="24" height="21" viewBox="0 0 24 21"><defs><linearGradient id="prg" x1="0" y1="0" x2="0" y2="1"><stop offset="0" stop-color="#ffffff"/><stop offset="1" stop-color="#9aa4ac"/></linearGradient></defs><rect x="6.5" y="0.5" width="11" height="7" fill="#fff" stroke="#333"/><path d="M8 3h8M8 5h6" stroke="#999" stroke-width="0.7"/><path d="M1 10c0-2 1.5-3.5 3.5-3.5h15c2 0 3.5 1.5 3.5 3.5v7c0 2-1 3.5-3 3.5H4c-2 0-3-1.5-3-3.5z" fill="url(#prg)" stroke="#333" stroke-width="1"/><path d="M4 8.5h16l-2 4H6z" fill="#2a8ae0"/><rect x="3" y="14.5" width="2" height="1.5" fill="#20a020"/><rect x="5.5" y="14.5" width="2" height="1.5" fill="#e02020"/></svg>
<svg style="left:1306px;top:585px" width="20" height="14" viewBox="0 0 20 14"><path d="M1 7C4 2 8 1 11 1s6 2 8 6c-2 4-5 6-8 6S4 11 1 7z" fill="#fff" stroke="#222" stroke-width="1.2"/><circle cx="11" cy="7" r="3.6" fill="#2060c0"/><circle cx="11" cy="7" r="1.5" fill="#000"/><path d="M1 7C2 3 4 1 7 1" stroke="#000" stroke-width="2"/></svg>
<div class="a" style="left:706px;top:720px;width:628px;height:31px;background:linear-gradient(#f8f8f8,#eeeeee 30%,#e6e6e6 80%,#dcdcdc)"></div>
<div class="a" style="left:706px;top:720px;width:59px;height:30px;background:#eeeeee"></div>
<svg style="left:708px;top:724px" width="56" height="22"><path d="M19 3.5L5.5 11L19 18.5z" fill="#8a94c8" stroke="#333a60" stroke-width="1"/><path d="M35.5 3.5L49 11L35.5 18.5z" fill="#8a94c8" stroke="#333a60" stroke-width="1"/></svg>
<div id="t162" class="t" style="left:765.50px;top:730.00px;font-family:'Liberation Sans',sans-serif;font-size:12.7px;color:#333;transform:scaleX(1.0882);transform-origin:0 0;">Pk: 7600.00</div>
<div class="a" style="left:840px;top:726px;width:494px;height:18px;background:#eeeeee"></div>
<div class="a" style="left:846px;top:731px;width:478px;height:6px;background:#eef2f6;border:1px solid #7a8a99"></div>
<svg style="left:839px;top:726px" width="18" height="17"><path d="M1.5 1.5h14v8l-7 6l-7-6z" fill="#f8fbff" stroke="#6a7a8a" stroke-width="1"/></svg>
</body></html>
